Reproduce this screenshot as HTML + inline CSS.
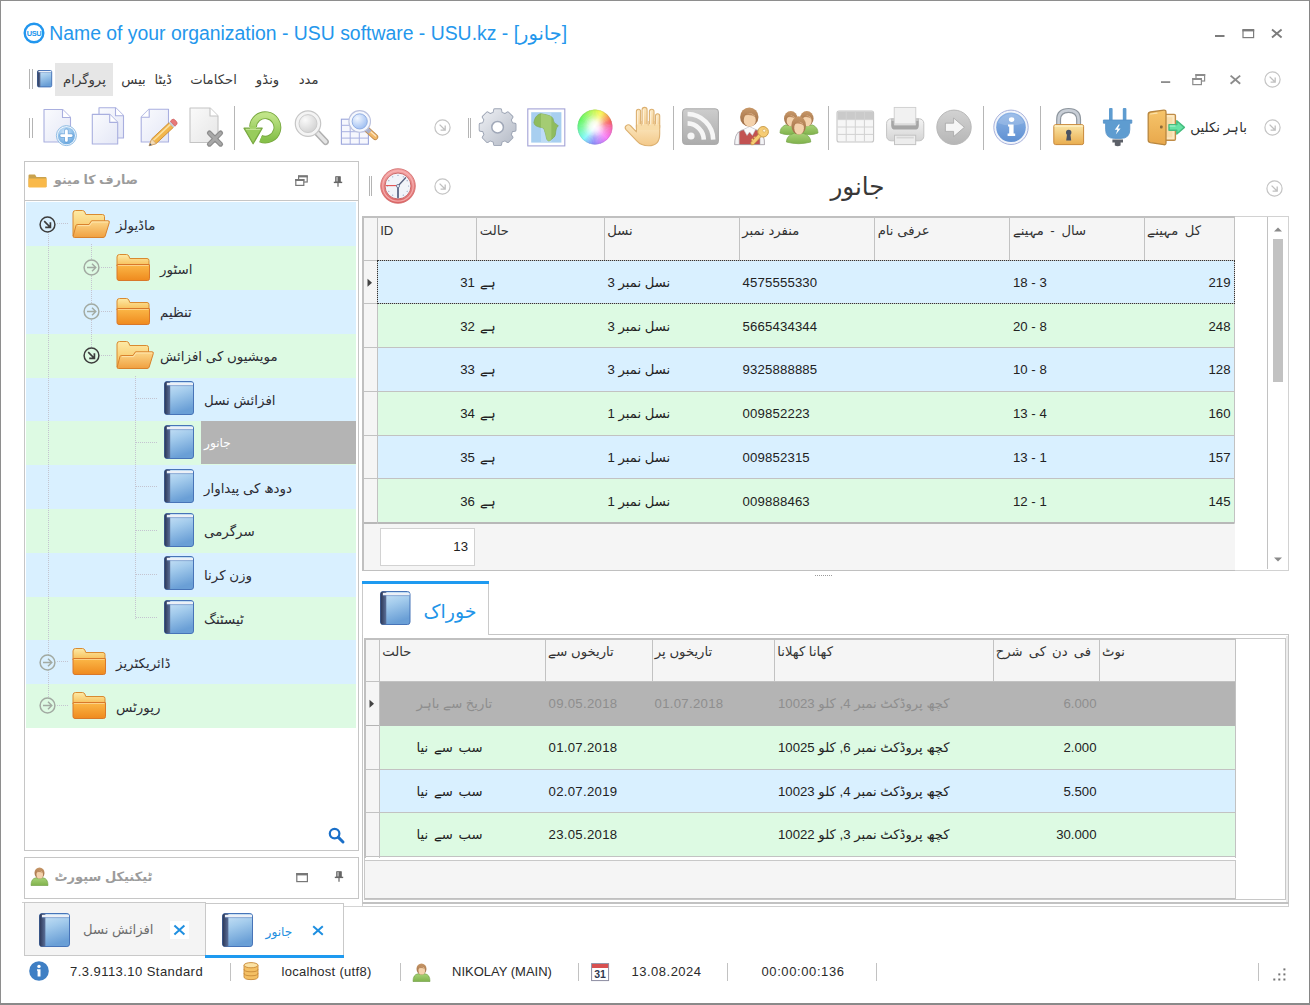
<!DOCTYPE html>
<html><head><meta charset="utf-8"><title>USU</title>
<style>
html,body{margin:0;padding:0}
body{width:1310px;height:1005px;position:relative;overflow:hidden;background:#fff;font-family:"Liberation Sans","DejaVu Sans",sans-serif;font-size:13px;color:#222}
body>div,body>svg{position:absolute;box-sizing:border-box}
.t{white-space:nowrap;line-height:16px;height:16px}
.g{color:#9c9c9c;font-weight:bold}
.i{overflow:visible}
</style></head><body>
<svg width="0" height="0" style="position:absolute;left:0;top:0"><defs>
<linearGradient id="gBkF" x1="0" y1="0" x2="0.3" y2="1"><stop offset="0" stop-color="#cfe6f8"/><stop offset="0.45" stop-color="#a3cbec"/><stop offset="1" stop-color="#6a9fd6"/></linearGradient>
<linearGradient id="gBkS" x1="0" y1="0" x2="1" y2="0"><stop offset="0" stop-color="#2b3656"/><stop offset="1" stop-color="#5b7099"/></linearGradient>
<linearGradient id="gFoB" x1="0" y1="0" x2="0" y2="1"><stop offset="0" stop-color="#fdeaa6"/><stop offset="1" stop-color="#f7bd55"/></linearGradient>
<linearGradient id="gFoF" x1="0" y1="0" x2="0" y2="1"><stop offset="0" stop-color="#fbb848"/><stop offset="1" stop-color="#ef8a1e"/></linearGradient>
<linearGradient id="gFoO" x1="0" y1="0" x2="0" y2="1"><stop offset="0" stop-color="#fcd88a"/><stop offset="1" stop-color="#f0a040"/></linearGradient>
<linearGradient id="gPg" x1="0" y1="0" x2="1" y2="1"><stop offset="0" stop-color="#fafbfe"/><stop offset="1" stop-color="#e4e7f6"/></linearGradient>
<linearGradient id="gPgG" x1="0" y1="0" x2="1" y2="1"><stop offset="0" stop-color="#fafafa"/><stop offset="1" stop-color="#e6e6e6"/></linearGradient>
<radialGradient id="gPlus" cx="0.4" cy="0.3" r="0.8"><stop offset="0" stop-color="#cfe6fa"/><stop offset="1" stop-color="#5fa2dc"/></radialGradient>
<linearGradient id="gGrn" x1="0" y1="0" x2="0" y2="1"><stop offset="0" stop-color="#c0e488"/><stop offset="1" stop-color="#86c04a"/></linearGradient>
<radialGradient id="gLens" cx="0.35" cy="0.3" r="0.8"><stop offset="0" stop-color="#fafafa"/><stop offset="1" stop-color="#cfcfcf"/></radialGradient>
<radialGradient id="gLensB" cx="0.35" cy="0.3" r="0.8"><stop offset="0" stop-color="#f2f7ff"/><stop offset="1" stop-color="#98baf0"/></radialGradient>
<linearGradient id="gGear" x1="0" y1="0" x2="1" y2="1"><stop offset="0" stop-color="#eef0f4"/><stop offset="1" stop-color="#b4bac6"/></linearGradient>
<linearGradient id="gSkin" x1="0" y1="0" x2="0" y2="1"><stop offset="0" stop-color="#fbe6bd"/><stop offset="1" stop-color="#f3c98a"/></linearGradient>
<linearGradient id="gGray" x1="0" y1="0" x2="0" y2="1"><stop offset="0" stop-color="#cdcdcd"/><stop offset="1" stop-color="#acacac"/></linearGradient>
<linearGradient id="gGray2" x1="0" y1="0" x2="0" y2="1"><stop offset="0" stop-color="#d2d2d2"/><stop offset="1" stop-color="#b6b6b6"/></linearGradient>
<linearGradient id="gGrayL" x1="0" y1="0" x2="0" y2="1"><stop offset="0" stop-color="#f4f4f4"/><stop offset="1" stop-color="#d4d4d4"/></linearGradient>
<linearGradient id="gInfo" x1="0" y1="0" x2="0" y2="1"><stop offset="0" stop-color="#8eb4e6"/><stop offset="1" stop-color="#5f90d2"/></linearGradient>
<linearGradient id="gLock" x1="0" y1="0" x2="0" y2="1"><stop offset="0" stop-color="#fae6a8"/><stop offset="1" stop-color="#e9ad4e"/></linearGradient>
<linearGradient id="gDoor" x1="0" y1="0" x2="0" y2="1"><stop offset="0" stop-color="#f6c46a"/><stop offset="1" stop-color="#e8a84c"/></linearGradient>
<linearGradient id="gBodyG" x1="0" y1="0" x2="0" y2="1"><stop offset="0" stop-color="#a8d276"/><stop offset="1" stop-color="#80b24c"/></linearGradient>
<linearGradient id="gHair" x1="0" y1="0" x2="0" y2="1"><stop offset="0" stop-color="#c89868"/><stop offset="1" stop-color="#9a6a44"/></linearGradient>
<linearGradient id="gClk" x1="0" y1="0" x2="0" y2="1"><stop offset="0" stop-color="#f4a4a4"/><stop offset="1" stop-color="#dc6464"/></linearGradient>
<radialGradient id="gWh" cx="0.5" cy="0.5" r="0.5"><stop offset="0" stop-color="#fff"/><stop offset="0.25" stop-color="#fff" stop-opacity="0.85"/><stop offset="0.65" stop-color="#fff" stop-opacity="0.3"/><stop offset="1" stop-color="#fff" stop-opacity="0.05"/></radialGradient>
</defs></svg>
<div class="" style="left:0px;top:0px;width:1310px;height:1px;background:#8e8e8e"></div>
<div class="" style="left:0px;top:0px;width:1.1px;height:1005px;background:#8e8e8e"></div>
<div class="" style="left:1308.6px;top:0px;width:1.4px;height:1005px;background:#868686"></div>
<div class="" style="left:0px;top:1003.3px;width:1310px;height:1.7px;background:#8a8a8a"></div>
<svg class="i" style="left:23px;top:21.5px" width="22" height="22" viewBox="0 0 22 22" ><circle cx="11" cy="11" r="9.3" fill="#fff" stroke="#2196ee" stroke-width="2.4"/><text x="11" y="13.8" font-size="7.4" font-weight="bold" text-anchor="middle" fill="#2196ee" font-family="Liberation Sans,sans-serif" letter-spacing="-0.4">USU</text></svg>
<div class="t" style="left:49.2px;top:20px;font-size:19.4px;line-height:26px;height:26px;color:#2497ec">Name of your organization - USU software - USU.kz - [جانور]</div>
<svg class="i" style="left:1214px;top:28px" width="70" height="12" viewBox="0 0 70 12" ><rect x="1" y="7" width="9.5" height="2" fill="#7c7c7c"/><rect x="29" y="2.2" width="10.6" height="7.4" fill="none" stroke="#7c7c7c" stroke-width="1.2"/><rect x="28.4" y="1" width="11.8" height="2.4" fill="#7c7c7c"/><path d="M58,1.6 L67.6,9.4 M67.6,1.6 L58,9.4" stroke="#7c7c7c" stroke-width="1.9"/></svg>
<svg class="i" style="left:1160px;top:73px" width="84" height="14" viewBox="0 0 84 14" ><rect x="1" y="8.2" width="9.2" height="1.8" fill="#8c8c8c"/><rect x="36" y="1.6" width="8.6" height="6.4" fill="#fff" stroke="#8c8c8c" stroke-width="1.2"/><rect x="35.4" y="1" width="9.8" height="2" fill="#8c8c8c"/><rect x="32.8" y="5.6" width="8.6" height="6" fill="#fff" stroke="#8c8c8c" stroke-width="1.2"/><rect x="32.2" y="5" width="9.8" height="2" fill="#8c8c8c"/><path d="M70.6,2.6 L80.2,10.8 M80.2,2.6 L70.6,10.8" stroke="#8c8c8c" stroke-width="1.9"/></svg>
<svg class="i" style="left:1263.5px;top:71px" width="17" height="17" viewBox="0 0 17 17" ><circle cx="8.5" cy="8.5" r="7.6" fill="#fff" stroke="#c4c4c4" stroke-width="1.2"/><path d="M5.6,5.6 L10.8,10.8 M6.6,11.2 H11.2 V6.6" fill="none" stroke="#c0c0c0" stroke-width="1.3"/></svg>
<div class="" style="left:29px;top:69px;width:1px;height:19.5px;background:#b4b4b4"></div>
<div class="" style="left:31.6px;top:69px;width:1px;height:19.5px;background:#b4b4b4"></div>
<svg class="i" style="left:37.3px;top:70px" width="15.2" height="17.4" viewBox="0 0 15.2 17.4" ><rect x="0.5" y="0.5" width="14.2" height="16.4" rx="1.27" fill="url(#gBkF)" stroke="#4774b8" stroke-width="1"/><path d="M1.77,0.5 H3.39 V16.9 H1.77 A1.27,1.27 0 0 1 0.5,15.63 V1.77 A1.27,1.27 0 0 1 1.77,0.5 Z" fill="url(#gBkS)"/><rect x="1.44" y="0.96" width="12.76" height="1.22" fill="#ecf0f7"/><rect x="1.44" y="2.17" width="12.76" height="0.60" fill="#6f8fc4" opacity="0.75"/></svg>
<div class="" style="left:55px;top:62.5px;width:57.5px;height:33px;background:#e6e6e6"></div>
<div class="t" style="right:1204.2px;top:71.4px;font-size:13.2px;line-height:18px;height:18px;color:#383838">پروگرام</div>
<div class="t" style="right:1138px;top:71.4px;font-size:13.2px;line-height:18px;height:18px;color:#383838;word-spacing:5px">ڈیٹا بیس</div>
<div class="t" style="right:1073.2px;top:71.4px;font-size:13.2px;line-height:18px;height:18px;color:#383838">احکامات</div>
<div class="t" style="right:1030.8px;top:71.4px;font-size:13.2px;line-height:18px;height:18px;color:#383838">ونڈو</div>
<div class="t" style="right:991.5px;top:71.4px;font-size:13.2px;line-height:18px;height:18px;color:#383838">مدد</div>
<div class="" style="left:29px;top:117.5px;width:1px;height:20px;background:#b4b4b4"></div>
<div class="" style="left:31.6px;top:117.5px;width:1px;height:20px;background:#b4b4b4"></div>
<svg class="i" style="left:43px;top:107px" width="36" height="40" viewBox="0 0 36 40" ><path d="M1,2.5 H19.5 L27.5,10.5 V35.0 H1 Z" fill="url(#gPg)" stroke="#a9afdf" stroke-width="1.1" stroke-linejoin="round"/><path d="M19.5,2.5 V10.5 H27.5" fill="#fff" stroke="#a9afdf" stroke-width="1.1" stroke-linejoin="round"/><circle cx="23.4" cy="28.6" r="10" fill="#f0f6fc" stroke="#8fbce4" stroke-width="1"/><circle cx="23.4" cy="28.6" r="8.6" fill="url(#gPlus)"/><path d="M23.4,23.6 V33.6 M18.4,28.6 H28.4" stroke="#5c98d4" stroke-width="4.6" stroke-linecap="round" opacity="0.55"/><path d="M23.4,23.8 V33.4 M18.6,28.6 H28.2" stroke="#fff" stroke-width="2.8" stroke-linecap="round"/></svg>
<svg class="i" style="left:91px;top:106px" width="34" height="40" viewBox="0 0 34 40" ><path d="M8,1.7 H24.5 L32.5,9.7 V32.0 H8 Z" fill="url(#gPg)" stroke="#a9afdf" stroke-width="1.1" stroke-linejoin="round"/><path d="M24.5,1.7 V9.7 H32.5" fill="#fff" stroke="#a9afdf" stroke-width="1.1" stroke-linejoin="round"/><path d="M1.3,8.4 H18.7 L26.7,16.4 V38.0 H1.3 Z" fill="url(#gPg)" stroke="#a9afdf" stroke-width="1.1" stroke-linejoin="round"/><path d="M18.7,8.4 V16.4 H26.7" fill="#fff" stroke="#a9afdf" stroke-width="1.1" stroke-linejoin="round"/></svg>
<svg class="i" style="left:140px;top:107px" width="38" height="40" viewBox="0 0 38 40" ><path d="M9.2,2.2 H28.5 V35.0 H1.2 V10.2 Z" fill="url(#gPg)" stroke="#a9afdf" stroke-width="1.1" stroke-linejoin="round"/><path d="M9.2,2.2 V10.2 H1.2" fill="#fff" stroke="#a9afdf" stroke-width="1.1" stroke-linejoin="round"/><g transform="translate(9.2,38.7) rotate(-43.2)"><path d="M0,0 L6.5,-3.2 H30 V3.2 H6.5 Z" fill="#f2b64c" stroke="#c8862c" stroke-width="0.8"/><path d="M6.5,-1 H30" stroke="#fbe0a0" stroke-width="1.6"/><path d="M0,0 L6.5,-3.2 V3.2 Z" fill="#f3dcb8" stroke="#c8a070" stroke-width="0.6"/><path d="M0,0 L2.4,-1.2 V1.2 Z" fill="#4a5a78"/><rect x="30" y="-3.4" width="2.2" height="6.8" fill="#c8ccd4"/><path d="M32.2,-3.4 H34.5 Q36.5,-3.4 36.5,0 Q36.5,3.4 34.5,3.4 H32.2 Z" fill="#e87878" stroke="#c85858" stroke-width="0.6"/></g></svg>
<svg class="i" style="left:189px;top:106px" width="36" height="40" viewBox="0 0 36 40" ><path d="M1,2 H21 L29,10 V36.5 H1 Z" fill="url(#gPgG)" stroke="#c4c4c4" stroke-width="1.1" stroke-linejoin="round"/><path d="M21,2 V10 H29" fill="#fff" stroke="#c4c4c4" stroke-width="1.1" stroke-linejoin="round"/><path d="M20.4,27 L31.6,38.2 M31.6,27 L20.4,38.2" stroke="#8c8c8c" stroke-width="5" stroke-linecap="round"/><path d="M20.6,27.2 L31.4,38 M31.4,27.2 L20.6,38" stroke="#a8a8a8" stroke-width="2.8" stroke-linecap="round"/></svg>
<div class="" style="left:234px;top:105.5px;width:1px;height:44.5px;background:#b6b6b6"></div>
<svg class="i" style="left:242px;top:109px" width="40" height="36" viewBox="0 0 40 36" ><path d="M18.63,29.71 A12.2,12.2 0 1 0 11.01,17.97" fill="none" stroke="#78a840" stroke-width="7.8"/><path d="M2,19.2 H20.2 L11.1,34.8 Z" fill="#78a840" stroke="#78a840" stroke-width="1.2" stroke-linejoin="round"/><path d="M18.63,29.71 A12.2,12.2 0 1 0 11.01,17.97" fill="none" stroke="url(#gGrn)" stroke-width="6"/><path d="M3.2,20 H19 L11.1,33.4 Z" fill="#98cc5c"/><path d="M11,17.6 V21" stroke="#a4d468" stroke-width="6"/><path d="M3.8,20.4 H18.4" stroke="#c4e494" stroke-width="1.2" opacity="0.9"/></svg>
<svg class="i" style="left:293px;top:109px" width="36" height="38" viewBox="0 0 36 38" ><path d="M24.6,24.2 L32.6,32.8" stroke="#b0b0b0" stroke-width="6.6" stroke-linecap="round"/><path d="M24.6,24.2 L32.6,32.8" stroke="#e4e4e4" stroke-width="3.6" stroke-linecap="round"/><circle cx="15" cy="14.6" r="12.7" fill="#f4f4f4" stroke="#c6c6c6" stroke-width="1.2"/><circle cx="15" cy="14.6" r="9" fill="url(#gLens)" stroke="#c8c8c8" stroke-width="0.9"/></svg>
<svg class="i" style="left:340px;top:108px" width="40" height="38" viewBox="0 0 40 38" ><rect x="1.4" y="11.2" width="27" height="25" fill="#f6f7fd" stroke="#9ca6dc" stroke-width="1.1"/><path d="M10.2,11.2 V36.2" stroke="#a8b0e0" stroke-width="1"/><path d="M19.3,11.2 V36.2" stroke="#a8b0e0" stroke-width="1"/><path d="M1.4,17.3 H28.4" stroke="#a8b0e0" stroke-width="1"/><path d="M1.4,23.7 H28.4" stroke="#a8b0e0" stroke-width="1"/><path d="M1.4,30.1 H28.4" stroke="#a8b0e0" stroke-width="1"/><path d="M27,21.6 L35.2,29" stroke="#c08c50" stroke-width="6" stroke-linecap="round"/><path d="M30.6,24.8 L35.2,29" stroke="#f2b868" stroke-width="4.4" stroke-linecap="round"/><path d="M31,24 L35.6,28" stroke="#fbe4c0" stroke-width="1.4" stroke-linecap="round"/><path d="M26.4,20.8 L30,24.2" stroke="#aab0c8" stroke-width="4.4"/><circle cx="19.7" cy="13.4" r="10.8" fill="#f6f8fd" stroke="#bcc2de" stroke-width="1.1"/><circle cx="19.7" cy="13.4" r="7.6" fill="url(#gLensB)" stroke="#8aa8e0" stroke-width="0.9"/></svg>
<svg class="i" style="left:434.3px;top:119.2px" width="17" height="17" viewBox="0 0 17 17" ><circle cx="8.5" cy="8.5" r="7.6" fill="#fff" stroke="#c4c4c4" stroke-width="1.2"/><path d="M5.6,5.6 L10.8,10.8 M6.6,11.2 H11.2 V6.6" fill="none" stroke="#c0c0c0" stroke-width="1.3"/></svg>
<div class="" style="left:467.5px;top:117.5px;width:1px;height:20px;background:#b4b4b4"></div>
<div class="" style="left:470.1px;top:117.5px;width:1px;height:20px;background:#b4b4b4"></div>
<svg class="i" style="left:478px;top:108px" width="40" height="40" viewBox="0 0 40 40" ><path d="M16.25,5.20 L16.83,2.02 L22.37,2.02 L22.95,5.20 L27.13,6.93 L29.79,5.09 L33.71,9.01 L31.87,11.67 L33.60,15.85 L36.78,16.43 L36.78,21.97 L33.60,22.55 L31.87,26.73 L33.71,29.39 L29.79,33.31 L27.13,31.47 L22.95,33.20 L22.37,36.38 L16.83,36.38 L16.25,33.20 L12.07,31.47 L9.41,33.31 L5.49,29.39 L7.33,26.73 L5.60,22.55 L2.42,21.97 L2.42,16.43 L5.60,15.85 L7.33,11.67 L5.49,9.01 L9.41,5.09 L12.07,6.93 Z" fill="#c8ccd6" stroke="#9ca4b4" stroke-width="3.4" stroke-linejoin="round"/><path d="M16.25,5.20 L16.83,2.02 L22.37,2.02 L22.95,5.20 L27.13,6.93 L29.79,5.09 L33.71,9.01 L31.87,11.67 L33.60,15.85 L36.78,16.43 L36.78,21.97 L33.60,22.55 L31.87,26.73 L33.71,29.39 L29.79,33.31 L27.13,31.47 L22.95,33.20 L22.37,36.38 L16.83,36.38 L16.25,33.20 L12.07,31.47 L9.41,33.31 L5.49,29.39 L7.33,26.73 L5.60,22.55 L2.42,21.97 L2.42,16.43 L5.60,15.85 L7.33,11.67 L5.49,9.01 L9.41,5.09 L12.07,6.93 Z" fill="url(#gGear)" stroke="url(#gGear)" stroke-width="1.6" stroke-linejoin="round"/><circle cx="19.6" cy="19.2" r="5.8" fill="#fff" stroke="#a0a8b8" stroke-width="1.5"/></svg>
<svg class="i" style="left:527px;top:108px" width="39" height="39" viewBox="0 0 39 39" ><rect x="0.8" y="0.9" width="37" height="37" fill="#fff" stroke="#a2a2d6" stroke-width="1.1"/><rect x="4.2" y="4.2" width="30.2" height="30.4" fill="#a8cff0"/><rect x="14" y="4.2" width="10.4" height="30.4" fill="#c6e0f6" opacity="0.7"/><path d="M7.1,13.6 C7.37,12.60 7.77,10.47 8.7,9.2 C9.63,7.93 11.23,6.47 12.7,6.0 C14.17,5.53 15.77,6.07 17.5,6.4 C19.23,6.73 21.70,7.33 23.1,8.0 C24.50,8.67 25.23,9.33 25.9,10.4 C26.57,11.47 26.23,13.20 27.1,14.4 C27.97,15.60 30.70,16.67 31.1,17.6 C31.50,18.53 29.90,18.93 29.5,20.0 C29.10,21.07 28.97,22.67 28.7,24.0 C28.43,25.33 28.57,26.80 27.9,28.0 C27.23,29.20 25.70,30.38 24.7,31.2 C23.70,32.02 22.70,32.88 21.9,32.9 C21.10,32.92 20.43,32.37 19.9,31.3 C19.37,30.23 19.10,27.97 18.7,26.5 C18.30,25.03 17.90,23.58 17.5,22.5 C17.10,21.42 17.10,20.55 16.3,20.0 C15.50,19.45 13.97,19.60 12.7,19.2 C11.43,18.80 9.63,18.27 8.7,17.6 C7.77,16.93 7.37,15.87 7.1,15.2 C6.83,14.53 6.83,14.60 7.1,13.6 Z" fill="#8fbc5e" stroke="#7ea854" stroke-width="0.7"/><clipPath id="cpAf"><rect x="14" y="0" width="10.4" height="39"/></clipPath><path d="M7.1,13.6 C7.37,12.60 7.77,10.47 8.7,9.2 C9.63,7.93 11.23,6.47 12.7,6.0 C14.17,5.53 15.77,6.07 17.5,6.4 C19.23,6.73 21.70,7.33 23.1,8.0 C24.50,8.67 25.23,9.33 25.9,10.4 C26.57,11.47 26.23,13.20 27.1,14.4 C27.97,15.60 30.70,16.67 31.1,17.6 C31.50,18.53 29.90,18.93 29.5,20.0 C29.10,21.07 28.97,22.67 28.7,24.0 C28.43,25.33 28.57,26.80 27.9,28.0 C27.23,29.20 25.70,30.38 24.7,31.2 C23.70,32.02 22.70,32.88 21.9,32.9 C21.10,32.92 20.43,32.37 19.9,31.3 C19.37,30.23 19.10,27.97 18.7,26.5 C18.30,25.03 17.90,23.58 17.5,22.5 C17.10,21.42 17.10,20.55 16.3,20.0 C15.50,19.45 13.97,19.60 12.7,19.2 C11.43,18.80 9.63,18.27 8.7,17.6 C7.77,16.93 7.37,15.87 7.1,15.2 C6.83,14.53 6.83,14.60 7.1,13.6 Z" fill="#a9d078" clip-path="url(#cpAf)" opacity="0.8"/></svg>
<svg class="i" style="left:577px;top:109.3px" width="36" height="36" viewBox="0 0 36 36" ><path d="M18,18 L17.65,0.60 A17.4,17.4 0 0 1 20.16,0.74 Z" fill="hsl(73,90%,59%)"/><path d="M18,18 L19.47,0.66 A17.4,17.4 0 0 1 21.96,1.06 Z" fill="hsl(69,90%,59%)"/><path d="M18,18 L21.28,0.91 A17.4,17.4 0 0 1 23.71,1.56 Z" fill="hsl(65,90%,59%)"/><path d="M18,18 L23.04,1.35 A17.4,17.4 0 0 1 25.39,2.25 Z" fill="hsl(61,90%,59%)"/><path d="M18,18 L24.76,1.97 A17.4,17.4 0 0 1 27.00,3.11 Z" fill="hsl(57,90%,59%)"/><path d="M18,18 L26.40,2.76 A17.4,17.4 0 0 1 28.51,4.13 Z" fill="hsl(52,90%,59%)"/><path d="M18,18 L27.94,3.72 A17.4,17.4 0 0 1 29.90,5.30 Z" fill="hsl(44,90%,59%)"/><path d="M18,18 L29.38,4.84 A17.4,17.4 0 0 1 31.16,6.62 Z" fill="hsl(38,90%,60%)"/><path d="M18,18 L30.70,6.10 A17.4,17.4 0 0 1 32.28,8.06 Z" fill="hsl(30,90%,60%)"/><path d="M18,18 L31.87,7.49 A17.4,17.4 0 0 1 33.24,9.60 Z" fill="hsl(24,90%,60%)"/><path d="M18,18 L32.89,9.00 A17.4,17.4 0 0 1 34.03,11.24 Z" fill="hsl(16,90%,61%)"/><path d="M18,18 L33.75,10.61 A17.4,17.4 0 0 1 34.65,12.96 Z" fill="hsl(6,90%,62%)"/><path d="M18,18 L34.44,12.29 A17.4,17.4 0 0 1 35.09,14.72 Z" fill="hsl(358,90%,63%)"/><path d="M18,18 L34.94,14.04 A17.4,17.4 0 0 1 35.34,16.53 Z" fill="hsl(348,90%,64%)"/><path d="M18,18 L35.26,15.84 A17.4,17.4 0 0 1 35.40,18.35 Z" fill="hsl(340,90%,65%)"/><path d="M18,18 L35.40,17.65 A17.4,17.4 0 0 1 35.26,20.16 Z" fill="hsl(333,90%,66%)"/><path d="M18,18 L35.34,19.47 A17.4,17.4 0 0 1 34.94,21.96 Z" fill="hsl(328,90%,66%)"/><path d="M18,18 L35.09,21.28 A17.4,17.4 0 0 1 34.44,23.71 Z" fill="hsl(323,90%,67%)"/><path d="M18,18 L34.65,23.04 A17.4,17.4 0 0 1 33.75,25.39 Z" fill="hsl(319,90%,67%)"/><path d="M18,18 L34.03,24.76 A17.4,17.4 0 0 1 32.89,27.00 Z" fill="hsl(314,90%,68%)"/><path d="M18,18 L33.24,26.40 A17.4,17.4 0 0 1 31.87,28.51 Z" fill="hsl(309,90%,68%)"/><path d="M18,18 L32.28,27.94 A17.4,17.4 0 0 1 30.70,29.90 Z" fill="hsl(305,90%,69%)"/><path d="M18,18 L31.16,29.38 A17.4,17.4 0 0 1 29.38,31.16 Z" fill="hsl(300,90%,70%)"/><path d="M18,18 L29.90,30.70 A17.4,17.4 0 0 1 27.94,32.28 Z" fill="hsl(293,90%,70%)"/><path d="M18,18 L28.51,31.87 A17.4,17.4 0 0 1 26.40,33.24 Z" fill="hsl(287,90%,71%)"/><path d="M18,18 L27.00,32.89 A17.4,17.4 0 0 1 24.76,34.03 Z" fill="hsl(280,90%,71%)"/><path d="M18,18 L25.39,33.75 A17.4,17.4 0 0 1 23.04,34.65 Z" fill="hsl(273,90%,72%)"/><path d="M18,18 L23.71,34.44 A17.4,17.4 0 0 1 21.28,35.09 Z" fill="hsl(267,90%,72%)"/><path d="M18,18 L21.96,34.94 A17.4,17.4 0 0 1 19.47,35.34 Z" fill="hsl(260,90%,73%)"/><path d="M18,18 L20.16,35.26 A17.4,17.4 0 0 1 17.65,35.40 Z" fill="hsl(253,90%,73%)"/><path d="M18,18 L18.35,35.40 A17.4,17.4 0 0 1 15.84,35.26 Z" fill="hsl(245,90%,73%)"/><path d="M18,18 L16.53,35.34 A17.4,17.4 0 0 1 14.04,34.94 Z" fill="hsl(236,90%,73%)"/><path d="M18,18 L14.72,35.09 A17.4,17.4 0 0 1 12.29,34.44 Z" fill="hsl(227,90%,73%)"/><path d="M18,18 L12.96,34.65 A17.4,17.4 0 0 1 10.61,33.75 Z" fill="hsl(217,90%,72%)"/><path d="M18,18 L11.24,34.03 A17.4,17.4 0 0 1 9.00,32.89 Z" fill="hsl(208,90%,72%)"/><path d="M18,18 L9.60,33.24 A17.4,17.4 0 0 1 7.49,31.87 Z" fill="hsl(199,90%,71%)"/><path d="M18,18 L8.06,32.28 A17.4,17.4 0 0 1 6.10,30.70 Z" fill="hsl(189,90%,70%)"/><path d="M18,18 L6.62,31.16 A17.4,17.4 0 0 1 4.84,29.38 Z" fill="hsl(180,90%,70%)"/><path d="M18,18 L5.30,29.90 A17.4,17.4 0 0 1 3.72,27.94 Z" fill="hsl(174,90%,69%)"/><path d="M18,18 L4.13,28.51 A17.4,17.4 0 0 1 2.76,26.40 Z" fill="hsl(168,90%,68%)"/><path d="M18,18 L3.11,27.00 A17.4,17.4 0 0 1 1.97,24.76 Z" fill="hsl(162,90%,67%)"/><path d="M18,18 L2.25,25.39 A17.4,17.4 0 0 1 1.35,23.04 Z" fill="hsl(156,90%,67%)"/><path d="M18,18 L1.56,23.71 A17.4,17.4 0 0 1 0.91,21.28 Z" fill="hsl(150,90%,66%)"/><path d="M18,18 L1.06,21.96 A17.4,17.4 0 0 1 0.66,19.47 Z" fill="hsl(144,90%,65%)"/><path d="M18,18 L0.74,20.16 A17.4,17.4 0 0 1 0.60,17.65 Z" fill="hsl(138,90%,65%)"/><path d="M18,18 L0.60,18.35 A17.4,17.4 0 0 1 0.74,15.84 Z" fill="hsl(133,90%,64%)"/><path d="M18,18 L0.66,16.53 A17.4,17.4 0 0 1 1.06,14.04 Z" fill="hsl(130,90%,64%)"/><path d="M18,18 L0.91,14.72 A17.4,17.4 0 0 1 1.56,12.29 Z" fill="hsl(127,90%,63%)"/><path d="M18,18 L1.35,12.96 A17.4,17.4 0 0 1 2.25,10.61 Z" fill="hsl(123,90%,63%)"/><path d="M18,18 L1.97,11.24 A17.4,17.4 0 0 1 3.11,9.00 Z" fill="hsl(120,90%,62%)"/><path d="M18,18 L2.76,9.60 A17.4,17.4 0 0 1 4.13,7.49 Z" fill="hsl(117,90%,62%)"/><path d="M18,18 L3.72,8.06 A17.4,17.4 0 0 1 5.30,6.10 Z" fill="hsl(113,90%,62%)"/><path d="M18,18 L4.84,6.62 A17.4,17.4 0 0 1 6.62,4.84 Z" fill="hsl(110,90%,62%)"/><path d="M18,18 L6.10,5.30 A17.4,17.4 0 0 1 8.06,3.72 Z" fill="hsl(105,90%,61%)"/><path d="M18,18 L7.49,4.13 A17.4,17.4 0 0 1 9.60,2.76 Z" fill="hsl(101,90%,61%)"/><path d="M18,18 L9.00,3.11 A17.4,17.4 0 0 1 11.24,1.97 Z" fill="hsl(96,90%,60%)"/><path d="M18,18 L10.61,2.25 A17.4,17.4 0 0 1 12.96,1.35 Z" fill="hsl(91,90%,60%)"/><path d="M18,18 L12.29,1.56 A17.4,17.4 0 0 1 14.72,0.91 Z" fill="hsl(87,90%,60%)"/><path d="M18,18 L14.04,1.06 A17.4,17.4 0 0 1 16.53,0.66 Z" fill="hsl(82,90%,60%)"/><path d="M18,18 L15.84,0.74 A17.4,17.4 0 0 1 18.35,0.60 Z" fill="hsl(77,90%,59%)"/><circle cx="17.4" cy="17.4" r="18.0" fill="url(#gWh)"/><circle cx="18" cy="18" r="17.099999999999998" fill="none" stroke="#8090a0" stroke-opacity="0.22" stroke-width="0.9"/></svg>
<svg class="i" style="left:624px;top:107px" width="38" height="40" viewBox="0 0 38 40" ><rect x="12.4" y="2.2" width="4.2" height="19.8" rx="2.10" fill="url(#gSkin)" stroke="#dcb070" stroke-width="1.1"/><rect x="18.1" y="0.4" width="5.0" height="21.6" rx="2.50" fill="url(#gSkin)" stroke="#dcb070" stroke-width="1.1"/><rect x="25.4" y="2.2" width="4.6" height="19.8" rx="2.30" fill="url(#gSkin)" stroke="#dcb070" stroke-width="1.1"/><rect x="31.5" y="6.7" width="4.2" height="15.3" rx="2.10" fill="url(#gSkin)" stroke="#dcb070" stroke-width="1.1"/><path d="M12.4,18.4 H35.7 V27 Q35.7,38.8 24.5,38.8 Q17,38.8 13,34.2 L2,22.6 Q0.2,20.4 2.2,18.6 Q4.6,16.8 6.8,19 L12.4,24.8 Z" fill="url(#gSkin)" stroke="#dcb070" stroke-width="1.1" stroke-linejoin="round"/><rect x="13" y="17" width="22.1" height="6" fill="#f8dca8"/><path d="M13.7,4.7 V17" stroke="#fdf0d6" stroke-width="1.2" stroke-linecap="round"/><path d="M19.4,2.9 V17" stroke="#fdf0d6" stroke-width="1.2" stroke-linecap="round"/><path d="M26.7,4.7 V17" stroke="#fdf0d6" stroke-width="1.2" stroke-linecap="round"/><path d="M32.8,9.2 V17" stroke="#fdf0d6" stroke-width="1.2" stroke-linecap="round"/><path d="M17.35,14 V18.6 M24.25,14 V18.6 M30.75,14 V18.6" stroke="#e6c088" stroke-width="1"/></svg>
<div class="" style="left:672.5px;top:105.5px;width:1px;height:44.5px;background:#b6b6b6"></div>
<svg class="i" style="left:682px;top:108px" width="37" height="37" viewBox="0 0 37 37" ><rect x="0.6" y="0.8" width="35.8" height="35.6" rx="3" fill="url(#gGray)" stroke="#a8a8a8" stroke-width="1"/><circle cx="9" cy="28" r="3.6" fill="#f6f6f6"/><path d="M5.6,15.4 A16.6,16.6 0 0 1 21.8,31.6" fill="none" stroke="#f6f6f6" stroke-width="4.6"/><path d="M5.6,6 A26,26 0 0 1 31.2,31.6" fill="none" stroke="#f6f6f6" stroke-width="4.6"/></svg>
<svg class="i" style="left:734px;top:106px" width="36" height="41" viewBox="0 0 36 41" ><path d="M0.8,38.6 Q0.8,27 7.4,24.4 L15.6,22 L23.8,24.4 Q30.4,27 30.4,38.6 Z" fill="#c25252" stroke="#8e8e96" stroke-width="0.8"/><path d="M0.8,38.6 Q0.8,28.6 5.2,25.6 V38.6 Z M30.4,38.6 Q30.4,28.6 26,25.6 V38.6 Z" fill="#f4f4f6" stroke="#a8a8b0" stroke-width="0.6"/><path d="M9.6,23.4 L13,29.4 L15.6,26 L18.4,29.4 L21.6,23.4 L15.6,20.6 Z" fill="#fafafc" stroke="#c0c0c8" stroke-width="0.6"/><ellipse cx="15.3" cy="11" rx="9.2" ry="9.60" fill="url(#gHair)"/><ellipse cx="15.76" cy="13.88" rx="6.07" ry="6.72" fill="#f4d2ac"/><path d="M8.86,10.04 Q15.30,3.80 21.92,11.48 Q16.22,7.64 8.86,10.04 Z" fill="#b07a4c" opacity="0.8"/><g transform="translate(29.1,25.8) rotate(43)"><circle cx="0" cy="0" r="5.3" fill="#f6cc74" stroke="#c89a48" stroke-width="0.9"/><circle cx="0" cy="-1.6" r="1.5" fill="#fff4d8" stroke="#c89a48" stroke-width="0.5"/><path d="M-1.7,4.8 H1.7 V16 L0,17.6 L-1.7,16 V14 H-3.2 V12.2 H-1.7 V10.8 H-2.8 V9 H-1.7 Z" fill="#f6cc74" stroke="#c89a48" stroke-width="0.8"/></g></svg>
<svg class="i" style="left:779px;top:109px" width="40" height="36" viewBox="0 0 40 36" ><path d="M1,24.0 Q1,18.4 6.3,16.0 H12.2 Q17.5,18.4 17.5,24.0 Q9.2,27.4 1,24.0 Z" fill="url(#gBodyG)" stroke="#74a446" stroke-width="0.7"/><ellipse cx="11.8" cy="9.6" rx="6.8" ry="7.70" fill="url(#gHair)"/><ellipse cx="12.14" cy="11.91" rx="4.49" ry="5.39" fill="#f4d2ac"/><path d="M7.04,8.83 Q11.80,3.82 16.70,9.98 Q12.48,6.90 7.04,8.83 Z" fill="#b07a4c" opacity="0.8"/><path d="M22.5,24.0 Q22.5,18.4 27.8,16.0 H33.7 Q39,18.4 39,24.0 Q30.8,27.4 22.5,24.0 Z" fill="url(#gBodyG)" stroke="#74a446" stroke-width="0.7"/><ellipse cx="27.8" cy="9.6" rx="6.8" ry="7.70" fill="url(#gHair)"/><ellipse cx="28.14" cy="11.91" rx="4.49" ry="5.39" fill="#f4d2ac"/><path d="M23.04,8.83 Q27.80,3.82 32.70,9.98 Q28.48,6.90 23.04,8.83 Z" fill="#b07a4c" opacity="0.8"/><path d="M7.4,33.0 Q7.4,26.8 15.2,24.2 H24.0 Q31.8,26.8 31.8,33.0 Q19.6,36.4 7.4,33.0 Z" fill="url(#gBodyG)" stroke="#74a446" stroke-width="0.7"/><ellipse cx="19.7" cy="16.4" rx="7.3" ry="9.20" fill="url(#gHair)"/><ellipse cx="20.06" cy="19.16" rx="4.82" ry="6.44" fill="#f4d2ac"/><path d="M14.59,15.48 Q19.70,9.50 24.96,16.86 Q20.43,13.18 14.59,15.48 Z" fill="#b07a4c" opacity="0.8"/></svg>
<div class="" style="left:827.5px;top:105.5px;width:1px;height:44.5px;background:#b6b6b6"></div>
<svg class="i" style="left:836px;top:110px" width="39" height="33" viewBox="0 0 39 33" ><rect x="1" y="1" width="36.6" height="31" rx="2" fill="#f6f6f6" stroke="#c6c6c6" stroke-width="1.1"/><path d="M1.5,3 Q1.5,1.5 3,1.5 H35.6 Q37.1,1.5 37.1,3 V9.6 H1.5 Z" fill="#cacaca"/><path d="M10.2,1.5 V31.5" stroke="#d2d2d2" stroke-width="1"/><path d="M19.3,1.5 V31.5" stroke="#d2d2d2" stroke-width="1"/><path d="M28.4,1.5 V31.5" stroke="#d2d2d2" stroke-width="1"/><path d="M1.5,9.6 H37.1" stroke="#d2d2d2" stroke-width="1"/><path d="M1.5,17 H37.1" stroke="#d2d2d2" stroke-width="1"/><path d="M1.5,24.4 H37.1" stroke="#d2d2d2" stroke-width="1"/></svg>
<svg class="i" style="left:886px;top:106px" width="39" height="39" viewBox="0 0 39 39" ><rect x="0.6" y="12.8" width="37.2" height="22" rx="4.5" fill="url(#gGrayL)" stroke="#c4c4c4" stroke-width="1"/><path d="M5.2,12.8 H32.8 V19.4 Q32.8,23.6 28.6,23.6 H9.4 Q5.2,23.6 5.2,19.4 Z" fill="#a6a6a6"/><path d="M5.2,12.8 H32.8 V15 H5.2 Z" fill="#c4c4c4"/><rect x="8.2" y="1.4" width="21.6" height="16.6" fill="#f1f1f1" stroke="#cdcdcd" stroke-width="0.9"/><path d="M8.2,18 H29.8 V19.4 H8.2 Z" fill="#dcdcdc"/><rect x="8.5" y="29.2" width="21.2" height="9.4" fill="#ededed" stroke="#c2c2c2" stroke-width="1"/><path d="M10.5,31.6 H27.8" stroke="#d6d6d6" stroke-width="1.8"/></svg>
<svg class="i" style="left:936px;top:109px" width="36" height="36" viewBox="0 0 36 36" ><circle cx="18" cy="18.3" r="17.2" fill="url(#gGray2)" stroke="#b8b8b8" stroke-width="1"/><path d="M9.4,14.2 H17.6 V9 L28.4,18.3 L17.6,27.6 V22.4 H9.4 Z" fill="#f6f6f6" stroke="#a6a6a6" stroke-width="0.8" stroke-linejoin="round"/></svg>
<div class="" style="left:982.7px;top:105.5px;width:1px;height:44.5px;background:#b6b6b6"></div>
<svg class="i" style="left:993px;top:109px" width="36" height="36" viewBox="0 0 36 36" ><circle cx="18" cy="18.3" r="17.2" fill="#f2f5fb" stroke="#a8b2dc" stroke-width="1"/><circle cx="18" cy="18.3" r="14.8" fill="url(#gInfo)"/><path d="M4.8,14 A14,14 0 0 1 31.2,14 Q18,19 4.8,14 Z" fill="#fff" opacity="0.16"/><ellipse cx="18.6" cy="10.6" rx="2.7" ry="2.3" fill="#fff"/><path d="M15,15.4 H20.6 V24.6 H22.2 V27 H14.6 V24.6 H16.2 V17.6 H15 Z" fill="#fff"/></svg>
<div class="" style="left:1040px;top:105.5px;width:1px;height:44.5px;background:#b6b6b6"></div>
<svg class="i" style="left:1052px;top:107px" width="34" height="40" viewBox="0 0 34 40" ><path d="M6.6,19 V12.6 Q6.6,3.4 16.6,3.4 Q26.6,3.4 26.6,12.6 V19" fill="none" stroke="#8e969e" stroke-width="5"/><path d="M6.6,19 V12.6 Q6.6,3.4 16.6,3.4 Q26.6,3.4 26.6,12.6 V19" fill="none" stroke="#c8ced6" stroke-width="2.6"/><rect x="1.8" y="17.6" width="29.8" height="20" rx="1.8" fill="url(#gLock)" stroke="#c8883a" stroke-width="1"/><path d="M2.6,19 H30.8" stroke="#fff4cc" stroke-width="1.2"/><circle cx="16.7" cy="25.4" r="2.7" fill="#4a5262"/><path d="M15.2,26 H18.2 L19.2,33.6 H14.2 Z" fill="#4a5262"/></svg>
<svg class="i" style="left:1102px;top:107px" width="31" height="41" viewBox="0 0 31 41" ><rect x="7" y="1" width="3.6" height="13" rx="1" fill="#5e9cd0"/><rect x="20.8" y="1" width="3.6" height="13" rx="1" fill="#5e9cd0"/><path d="M1.4,13 H29.8 V16.2 H27.8 V22.6 Q27.8,31.4 19,31.4 H12.4 Q3.6,31.4 3.6,22.6 V16.2 H1.4 Z" fill="#5e9cd0" stroke="#5490c6" stroke-width="0.8"/><path d="M16.6,17.4 L12.8,22.8 H15.4 L13.8,27.6 L18.6,21.4 H15.9 L17.8,17.4 Z" fill="#fff"/><path d="M10.4,32.6 H21 V35.4 H18.6 V38.6 Q15.7,40 12.8,38.6 V35.4 H10.4 Z" fill="#5c6068"/></svg>
<svg class="i" style="left:1147px;top:108px" width="40" height="40" viewBox="0 0 40 40" ><rect x="15" y="6.4" width="13.4" height="25.8" rx="1.2" fill="#fde8c0" stroke="#c08c48" stroke-width="1.4"/><rect x="18" y="9.2" width="7.4" height="20.2" fill="#f8dcaa"/><path d="M1.2,6.6 Q1.2,4.4 3.4,4 L16.8,2.2 Q19,2 19,4.2 V34.8 Q19,37 16.8,36.7 L3.4,34.6 Q1.2,34.2 1.2,32 Z" fill="url(#gDoor)" stroke="#b8863e" stroke-width="1.3"/><path d="M3.6,6 L10,5.2" stroke="#fbe2a8" stroke-width="1.2" stroke-linecap="round"/><rect x="13" y="17.4" width="2.6" height="3.2" rx="0.8" fill="#8a6a3c"/><path d="M22,16.6 H29.8 V12.8 L37.4,19.4 L29.8,26 V22.2 H22 Z" fill="#66e2a4" stroke="#44bc7e" stroke-width="1.4" stroke-linejoin="round"/><path d="M23,18 H28" stroke="#b4f4d4" stroke-width="1.2" stroke-linecap="round"/></svg>
<div class="t" style="right:63px;top:119px;font-size:13.4px;line-height:18px;height:18px;color:#303030">باہر نکلیں</div>
<svg class="i" style="left:1263.5px;top:119.2px" width="17" height="17" viewBox="0 0 17 17" ><circle cx="8.5" cy="8.5" r="7.6" fill="#fff" stroke="#c4c4c4" stroke-width="1.2"/><path d="M5.6,5.6 L10.8,10.8 M6.6,11.2 H11.2 V6.6" fill="none" stroke="#c0c0c0" stroke-width="1.3"/></svg>
<div class="" style="left:24px;top:161px;width:335px;height:690px;border:1px solid #c6c6c6;background:#fff"></div>
<div class="" style="left:25px;top:200px;width:333px;height:1px;background:#c6c6c6"></div>
<svg class="i" style="left:28px;top:173.5px" width="19" height="14" viewBox="0 0 19 14" ><path d="M0.5,1.5 Q0.5,0.5 1.5,0.5 H7 L8.5,3 H17.5 Q18.5,3 18.5,4 V13 H0.5 Z" fill="#c9a24e"/><path d="M0.5,4.5 H18.5 V12.5 Q18.5,13.5 17.5,13.5 H1.5 Q0.5,13.5 0.5,12.5 Z" fill="#f9b94a"/></svg>
<div class="t g" style="left:54px;top:171px;font-size:12.6px;line-height:18px;height:18px">صارف کا مینو</div>
<svg class="i" style="left:294.5px;top:175px" width="14" height="12" viewBox="0 0 14 12" ><rect x="3.6" y="1" width="8.6" height="6" fill="#fff" stroke="#777" stroke-width="1.2"/><rect x="3" y="0.4" width="9.8" height="2" fill="#777"/><rect x="0.8" y="4.6" width="8" height="5.8" fill="#fff" stroke="#777" stroke-width="1.2"/><rect x="0.2" y="4" width="9.2" height="2" fill="#777"/></svg>
<svg class="i" style="left:333px;top:175.5px" width="10" height="11" viewBox="0 0 10 11" ><path d="M2.6,0.6 H7.4 V6 H2.6 Z" fill="#aaa" stroke="#777" stroke-width="1"/><rect x="5" y="1" width="2" height="5" fill="#666"/><path d="M0.8,6.4 H9.2" stroke="#666" stroke-width="1.4"/><path d="M5,7 V10.8" stroke="#666" stroke-width="1.2"/></svg>
<div class="" style="left:26px;top:202.4px;width:329.8px;height:43.9px;background:#d9f0ff"></div>
<div class="" style="left:26px;top:246.2px;width:329.8px;height:43.9px;background:#ddfae3"></div>
<div class="" style="left:26px;top:290.0px;width:329.8px;height:43.9px;background:#d9f0ff"></div>
<div class="" style="left:26px;top:333.8px;width:329.8px;height:43.9px;background:#ddfae3"></div>
<div class="" style="left:26px;top:377.6px;width:329.8px;height:43.9px;background:#d9f0ff"></div>
<div class="" style="left:26px;top:421.4px;width:329.8px;height:43.9px;background:#ddfae3"></div>
<div class="" style="left:26px;top:465.2px;width:329.8px;height:43.9px;background:#d9f0ff"></div>
<div class="" style="left:26px;top:509.0px;width:329.8px;height:43.9px;background:#ddfae3"></div>
<div class="" style="left:26px;top:552.8px;width:329.8px;height:43.9px;background:#d9f0ff"></div>
<div class="" style="left:26px;top:596.6px;width:329.8px;height:43.9px;background:#ddfae3"></div>
<div class="" style="left:26px;top:640.4px;width:329.8px;height:43.9px;background:#d9f0ff"></div>
<div class="" style="left:26px;top:684.2px;width:329.8px;height:43.9px;background:#ddfae3"></div>
<div class="" style="left:47.5px;top:232px;width:1px;height:473.19999999999993px;background:repeating-linear-gradient(to bottom,#c4c4d0 0 1px,transparent 1px 2px)"></div>
<div class="" style="left:91.3px;top:243.5px;width:1px;height:104.29999999999995px;background:repeating-linear-gradient(to bottom,#c4c4d0 0 1px,transparent 1px 2px)"></div>
<div class="" style="left:135.2px;top:375.79999999999995px;width:1px;height:242.80000000000007px;background:repeating-linear-gradient(to bottom,#c4c4d0 0 1px,transparent 1px 2px)"></div>
<svg class="i" style="left:39.4px;top:215.5px" width="17" height="17" viewBox="0 0 17 17" ><circle cx="8.5" cy="8.5" r="7" fill="#d9f0ff"/><circle cx="8.5" cy="8.5" r="7.4" fill="none" stroke="#3c3c3c" stroke-width="1.5"/><path d="M5.2,5.2 L11,11 M6.2,11.4 H11.4 V6.2" fill="none" stroke="#3c3c3c" stroke-width="1.7"/></svg>
<div class="" style="left:56.9px;top:223.2px;width:12.000000000000007px;height:1px;background:repeating-linear-gradient(to right,#c4c4d0 0 1px,transparent 1px 2px)"></div>
<svg class="i" style="left:72px;top:209.8px" width="38" height="28" viewBox="0 0 38 28" ><path d="M1,3 Q1,0.5 3.5,0.5 H10.5 Q12,0.5 12.8,2 L13.8,4.5 H30.5 Q32.5,4.5 32.5,6.5 V26 H1 Z" fill="url(#gFoB)" stroke="#d98a30" stroke-width="1"/><path d="M5.2,14.5 H17 L19.5,10.8 H36 Q37.8,10.8 37.3,12.5 L33.2,26 Q32.8,27.5 31,27.5 H2.5 Q0.8,27.5 1.2,26 L4,15.5 Q4.3,14.5 5.2,14.5 Z" fill="url(#gFoO)" stroke="#d9822c" stroke-width="1"/><path d="M6,15.6 H17.6 L20,12 H36" stroke="#fee6b0" stroke-width="1" fill="none" opacity="0.9"/></svg>
<div class="t" style="left:116px;top:216.8px;font-size:13.4px;line-height:18px;height:18px;color:#2c2c34">ماڈیولز</div>
<svg class="i" style="left:83.2px;top:259.3px" width="17" height="17" viewBox="0 0 17 17" ><circle cx="8.5" cy="8.5" r="7" fill="#ddfae3"/><circle cx="8.5" cy="8.5" r="7.4" fill="none" stroke="#a2aaa2" stroke-width="1.5"/><path d="M4,8.5 H12.6 M9,4.8 L12.8,8.5 L9,12.2" fill="none" stroke="#a2aaa2" stroke-width="1.4"/></svg>
<div class="" style="left:100.7px;top:267.0px;width:12.0px;height:1px;background:repeating-linear-gradient(to right,#c4c4d0 0 1px,transparent 1px 2px)"></div>
<svg class="i" style="left:116px;top:253.8px" width="34.5" height="27" viewBox="0 0 34.5 27" ><path d="M1,3 Q1,0.5 3.5,0.5 H10.5 Q12,0.5 12.8,2 L13.8,4.5 H31 Q33,4.5 33,6.5 V12 H1 Z" fill="url(#gFoB)" stroke="#d98a30" stroke-width="1"/><path d="M1.5,10.5 H33 Q33.5,10.5 33.5,11 V24.5 Q33.5,26.5 31.5,26.5 H3 Q1,26.5 1,24.5 V11 Q1,10.5 1.5,10.5 Z" fill="url(#gFoF)" stroke="#d9782a" stroke-width="1"/><path d="M2,11.5 H32.5" stroke="#fdd590" stroke-width="1" opacity="0.9"/></svg>
<div class="t" style="left:160px;top:260.6px;font-size:13.4px;line-height:18px;height:18px;color:#2c2c34">اسٹور</div>
<svg class="i" style="left:83.2px;top:303.1px" width="17" height="17" viewBox="0 0 17 17" ><circle cx="8.5" cy="8.5" r="7" fill="#d9f0ff"/><circle cx="8.5" cy="8.5" r="7.4" fill="none" stroke="#a2aaa2" stroke-width="1.5"/><path d="M4,8.5 H12.6 M9,4.8 L12.8,8.5 L9,12.2" fill="none" stroke="#a2aaa2" stroke-width="1.4"/></svg>
<div class="" style="left:100.7px;top:310.8px;width:12.0px;height:1px;background:repeating-linear-gradient(to right,#c4c4d0 0 1px,transparent 1px 2px)"></div>
<svg class="i" style="left:116px;top:297.6px" width="34.5" height="27" viewBox="0 0 34.5 27" ><path d="M1,3 Q1,0.5 3.5,0.5 H10.5 Q12,0.5 12.8,2 L13.8,4.5 H31 Q33,4.5 33,6.5 V12 H1 Z" fill="url(#gFoB)" stroke="#d98a30" stroke-width="1"/><path d="M1.5,10.5 H33 Q33.5,10.5 33.5,11 V24.5 Q33.5,26.5 31.5,26.5 H3 Q1,26.5 1,24.5 V11 Q1,10.5 1.5,10.5 Z" fill="url(#gFoF)" stroke="#d9782a" stroke-width="1"/><path d="M2,11.5 H32.5" stroke="#fdd590" stroke-width="1" opacity="0.9"/></svg>
<div class="t" style="left:160px;top:304.4px;font-size:13.4px;line-height:18px;height:18px;color:#2c2c34">تنظیم</div>
<svg class="i" style="left:83.2px;top:346.9px" width="17" height="17" viewBox="0 0 17 17" ><circle cx="8.5" cy="8.5" r="7" fill="#ddfae3"/><circle cx="8.5" cy="8.5" r="7.4" fill="none" stroke="#3c3c3c" stroke-width="1.5"/><path d="M5.2,5.2 L11,11 M6.2,11.4 H11.4 V6.2" fill="none" stroke="#3c3c3c" stroke-width="1.7"/></svg>
<div class="" style="left:100.7px;top:354.6px;width:12.0px;height:1px;background:repeating-linear-gradient(to right,#c4c4d0 0 1px,transparent 1px 2px)"></div>
<svg class="i" style="left:116px;top:341.2px" width="38" height="28" viewBox="0 0 38 28" ><path d="M1,3 Q1,0.5 3.5,0.5 H10.5 Q12,0.5 12.8,2 L13.8,4.5 H30.5 Q32.5,4.5 32.5,6.5 V26 H1 Z" fill="url(#gFoB)" stroke="#d98a30" stroke-width="1"/><path d="M5.2,14.5 H17 L19.5,10.8 H36 Q37.8,10.8 37.3,12.5 L33.2,26 Q32.8,27.5 31,27.5 H2.5 Q0.8,27.5 1.2,26 L4,15.5 Q4.3,14.5 5.2,14.5 Z" fill="url(#gFoO)" stroke="#d9822c" stroke-width="1"/><path d="M6,15.6 H17.6 L20,12 H36" stroke="#fee6b0" stroke-width="1" fill="none" opacity="0.9"/></svg>
<div class="t" style="left:160px;top:348.2px;font-size:13.4px;line-height:18px;height:18px;color:#2c2c34">مویشیوں کی افزائش</div>
<div class="" style="left:136px;top:398.4px;width:21px;height:1px;background:repeating-linear-gradient(to right,#c4c4d0 0 1px,transparent 1px 2px)"></div>
<svg class="i" style="left:163.7px;top:381.2px" width="30" height="34" viewBox="0 0 30 34" ><rect x="0.5" y="0.5" width="29" height="33" rx="2.50" fill="url(#gBkF)" stroke="#4774b8" stroke-width="1"/><path d="M3.00,0.5 H6.20 V33.5 H3.00 A2.50,2.50 0 0 1 0.5,31.00 V3.00 A2.50,2.50 0 0 1 3.00,0.5 Z" fill="url(#gBkS)"/><rect x="2.85" y="1.87" width="26.15" height="2.38" fill="#ecf0f7"/><rect x="2.85" y="4.25" width="26.15" height="0.85" fill="#6f8fc4" opacity="0.75"/></svg>
<div class="t" style="left:204px;top:392.0px;font-size:13.4px;line-height:18px;height:18px;color:#2c2c34">افزائش نسل</div>
<div class="" style="left:136px;top:442.2px;width:21px;height:1px;background:repeating-linear-gradient(to right,#c4c4d0 0 1px,transparent 1px 2px)"></div>
<svg class="i" style="left:163.7px;top:425.0px" width="30" height="34" viewBox="0 0 30 34" ><rect x="0.5" y="0.5" width="29" height="33" rx="2.50" fill="url(#gBkF)" stroke="#4774b8" stroke-width="1"/><path d="M3.00,0.5 H6.20 V33.5 H3.00 A2.50,2.50 0 0 1 0.5,31.00 V3.00 A2.50,2.50 0 0 1 3.00,0.5 Z" fill="url(#gBkS)"/><rect x="2.85" y="1.87" width="26.15" height="2.38" fill="#ecf0f7"/><rect x="2.85" y="4.25" width="26.15" height="0.85" fill="#6f8fc4" opacity="0.75"/></svg>
<div class="" style="left:201px;top:420.8px;width:154.8px;height:43.4px;background:#b4b4b4"></div>
<div class="t" style="left:204px;top:435.4px;font-size:12.2px;line-height:16px;color:#fff">جانور</div>
<div class="" style="left:136px;top:486.0px;width:21px;height:1px;background:repeating-linear-gradient(to right,#c4c4d0 0 1px,transparent 1px 2px)"></div>
<svg class="i" style="left:163.7px;top:468.8px" width="30" height="34" viewBox="0 0 30 34" ><rect x="0.5" y="0.5" width="29" height="33" rx="2.50" fill="url(#gBkF)" stroke="#4774b8" stroke-width="1"/><path d="M3.00,0.5 H6.20 V33.5 H3.00 A2.50,2.50 0 0 1 0.5,31.00 V3.00 A2.50,2.50 0 0 1 3.00,0.5 Z" fill="url(#gBkS)"/><rect x="2.85" y="1.87" width="26.15" height="2.38" fill="#ecf0f7"/><rect x="2.85" y="4.25" width="26.15" height="0.85" fill="#6f8fc4" opacity="0.75"/></svg>
<div class="t" style="left:204px;top:479.6px;font-size:13.4px;line-height:18px;height:18px;color:#2c2c34">دودھ کی پیداوار</div>
<div class="" style="left:136px;top:529.8px;width:21px;height:1px;background:repeating-linear-gradient(to right,#c4c4d0 0 1px,transparent 1px 2px)"></div>
<svg class="i" style="left:163.7px;top:512.6px" width="30" height="34" viewBox="0 0 30 34" ><rect x="0.5" y="0.5" width="29" height="33" rx="2.50" fill="url(#gBkF)" stroke="#4774b8" stroke-width="1"/><path d="M3.00,0.5 H6.20 V33.5 H3.00 A2.50,2.50 0 0 1 0.5,31.00 V3.00 A2.50,2.50 0 0 1 3.00,0.5 Z" fill="url(#gBkS)"/><rect x="2.85" y="1.87" width="26.15" height="2.38" fill="#ecf0f7"/><rect x="2.85" y="4.25" width="26.15" height="0.85" fill="#6f8fc4" opacity="0.75"/></svg>
<div class="t" style="left:204px;top:523.4px;font-size:13.4px;line-height:18px;height:18px;color:#2c2c34">سرگرمی</div>
<div class="" style="left:136px;top:573.6px;width:21px;height:1px;background:repeating-linear-gradient(to right,#c4c4d0 0 1px,transparent 1px 2px)"></div>
<svg class="i" style="left:163.7px;top:556.4px" width="30" height="34" viewBox="0 0 30 34" ><rect x="0.5" y="0.5" width="29" height="33" rx="2.50" fill="url(#gBkF)" stroke="#4774b8" stroke-width="1"/><path d="M3.00,0.5 H6.20 V33.5 H3.00 A2.50,2.50 0 0 1 0.5,31.00 V3.00 A2.50,2.50 0 0 1 3.00,0.5 Z" fill="url(#gBkS)"/><rect x="2.85" y="1.87" width="26.15" height="2.38" fill="#ecf0f7"/><rect x="2.85" y="4.25" width="26.15" height="0.85" fill="#6f8fc4" opacity="0.75"/></svg>
<div class="t" style="left:204px;top:567.2px;font-size:13.4px;line-height:18px;height:18px;color:#2c2c34">وزن کرنا</div>
<div class="" style="left:136px;top:617.4px;width:21px;height:1px;background:repeating-linear-gradient(to right,#c4c4d0 0 1px,transparent 1px 2px)"></div>
<svg class="i" style="left:163.7px;top:600.2px" width="30" height="34" viewBox="0 0 30 34" ><rect x="0.5" y="0.5" width="29" height="33" rx="2.50" fill="url(#gBkF)" stroke="#4774b8" stroke-width="1"/><path d="M3.00,0.5 H6.20 V33.5 H3.00 A2.50,2.50 0 0 1 0.5,31.00 V3.00 A2.50,2.50 0 0 1 3.00,0.5 Z" fill="url(#gBkS)"/><rect x="2.85" y="1.87" width="26.15" height="2.38" fill="#ecf0f7"/><rect x="2.85" y="4.25" width="26.15" height="0.85" fill="#6f8fc4" opacity="0.75"/></svg>
<div class="t" style="left:204px;top:611.0px;font-size:13.4px;line-height:18px;height:18px;color:#2c2c34">ٹیسٹنگ</div>
<svg class="i" style="left:39.4px;top:653.5px" width="17" height="17" viewBox="0 0 17 17" ><circle cx="8.5" cy="8.5" r="7" fill="#d9f0ff"/><circle cx="8.5" cy="8.5" r="7.4" fill="none" stroke="#a2aaa2" stroke-width="1.5"/><path d="M4,8.5 H12.6 M9,4.8 L12.8,8.5 L9,12.2" fill="none" stroke="#a2aaa2" stroke-width="1.4"/></svg>
<div class="" style="left:56.9px;top:661.2px;width:12.000000000000007px;height:1px;background:repeating-linear-gradient(to right,#c4c4d0 0 1px,transparent 1px 2px)"></div>
<svg class="i" style="left:72px;top:648.0px" width="34.5" height="27" viewBox="0 0 34.5 27" ><path d="M1,3 Q1,0.5 3.5,0.5 H10.5 Q12,0.5 12.8,2 L13.8,4.5 H31 Q33,4.5 33,6.5 V12 H1 Z" fill="url(#gFoB)" stroke="#d98a30" stroke-width="1"/><path d="M1.5,10.5 H33 Q33.5,10.5 33.5,11 V24.5 Q33.5,26.5 31.5,26.5 H3 Q1,26.5 1,24.5 V11 Q1,10.5 1.5,10.5 Z" fill="url(#gFoF)" stroke="#d9782a" stroke-width="1"/><path d="M2,11.5 H32.5" stroke="#fdd590" stroke-width="1" opacity="0.9"/></svg>
<div class="t" style="left:116px;top:654.8px;font-size:13.4px;line-height:18px;height:18px;color:#2c2c34">ڈائریکٹریز</div>
<svg class="i" style="left:39.4px;top:697.3px" width="17" height="17" viewBox="0 0 17 17" ><circle cx="8.5" cy="8.5" r="7" fill="#ddfae3"/><circle cx="8.5" cy="8.5" r="7.4" fill="none" stroke="#a2aaa2" stroke-width="1.5"/><path d="M4,8.5 H12.6 M9,4.8 L12.8,8.5 L9,12.2" fill="none" stroke="#a2aaa2" stroke-width="1.4"/></svg>
<div class="" style="left:56.9px;top:705.0px;width:12.000000000000007px;height:1px;background:repeating-linear-gradient(to right,#c4c4d0 0 1px,transparent 1px 2px)"></div>
<svg class="i" style="left:72px;top:691.8px" width="34.5" height="27" viewBox="0 0 34.5 27" ><path d="M1,3 Q1,0.5 3.5,0.5 H10.5 Q12,0.5 12.8,2 L13.8,4.5 H31 Q33,4.5 33,6.5 V12 H1 Z" fill="url(#gFoB)" stroke="#d98a30" stroke-width="1"/><path d="M1.5,10.5 H33 Q33.5,10.5 33.5,11 V24.5 Q33.5,26.5 31.5,26.5 H3 Q1,26.5 1,24.5 V11 Q1,10.5 1.5,10.5 Z" fill="url(#gFoF)" stroke="#d9782a" stroke-width="1"/><path d="M2,11.5 H32.5" stroke="#fdd590" stroke-width="1" opacity="0.9"/></svg>
<div class="t" style="left:116px;top:698.6px;font-size:13.4px;line-height:18px;height:18px;color:#2c2c34">رپورٹس</div>
<svg class="i" style="left:327.5px;top:826.5px" width="17" height="17" viewBox="0 0 17 17" ><circle cx="6.6" cy="6.6" r="4.8" fill="#fff" stroke="#1a6fc8" stroke-width="2.2"/><path d="M10.4,10.4 L15,15" stroke="#1a6fc8" stroke-width="3" stroke-linecap="round"/></svg>
<div class="" style="left:24px;top:856.5px;width:335px;height:42px;border:1px solid #c6c6c6;background:#fff"></div>
<svg class="i" style="left:29.5px;top:866.5px" width="19" height="19" viewBox="0 0 19 19" ><path d="M1,18.5 Q1,11.5 6,10.8 H13 Q18,11.5 18,18.5 Z" fill="url(#gBodyG)" stroke="#6a9a3c" stroke-width="0.6"/><ellipse cx="9.5" cy="6" rx="5" ry="5.60" fill="url(#gHair)"/><ellipse cx="9.75" cy="7.68" rx="3.30" ry="3.92" fill="#f4d2ac"/><path d="M6.00,5.44 Q9.50,1.80 13.10,6.28 Q10.00,4.04 6.00,5.44 Z" fill="#b07a4c" opacity="0.8"/></svg>
<div class="t g" style="left:54.5px;top:868px;font-size:13px;line-height:18px;height:18px">ٹیکنیکل سپورٹ</div>
<svg class="i" style="left:296px;top:871.5px" width="13" height="11" viewBox="0 0 13 11" ><rect x="0.8" y="1.6" width="10.6" height="8" fill="#fff" stroke="#777" stroke-width="1.2"/><rect x="0.2" y="1" width="11.8" height="2.4" fill="#777"/></svg>
<svg class="i" style="left:333.5px;top:871px" width="10" height="11" viewBox="0 0 10 11" ><path d="M2.6,0.6 H7.4 V6 H2.6 Z" fill="#aaa" stroke="#777" stroke-width="1"/><rect x="5" y="1" width="2" height="5" fill="#666"/><path d="M0.8,6.4 H9.2" stroke="#666" stroke-width="1.4"/><path d="M5,7 V10.8" stroke="#666" stroke-width="1.2"/></svg>
<div class="" style="left:22px;top:902.4px;width:184px;height:1px;background:#cfcfcf"></div>
<div class="" style="left:343px;top:905.6px;width:945.5px;height:1px;background:#d4d4d4"></div>
<div class="" style="left:24px;top:902.4px;width:182px;height:53.6px;background:#f4f4f4;border:1px solid #c9c9c9"></div>
<div class="" style="left:205px;top:903.2px;width:139px;height:53px;background:#fff;border:1px solid #c9c9c9;border-bottom:none"></div>
<div class="" style="left:205px;top:955.4px;width:139px;height:2.6px;background:#1e9af0"></div>
<svg class="i" style="left:39px;top:912.5px" width="31" height="34" viewBox="0 0 31 34" ><rect x="0.5" y="0.5" width="30" height="33" rx="2.58" fill="url(#gBkF)" stroke="#4774b8" stroke-width="1"/><path d="M3.08,0.5 H6.39 V33.5 H3.08 A2.58,2.58 0 0 1 0.5,30.92 V3.08 A2.58,2.58 0 0 1 3.08,0.5 Z" fill="url(#gBkS)"/><rect x="2.94" y="1.87" width="27.05" height="2.38" fill="#ecf0f7"/><rect x="2.94" y="4.25" width="27.05" height="0.85" fill="#6f8fc4" opacity="0.75"/></svg>
<div class="t" style="left:83px;top:921px;font-size:13.2px;line-height:18px;height:18px;color:#6e6e6e">افزائش نسل</div>
<svg class="i" style="left:173px;top:923.5px" width="13" height="12" viewBox="0 0 13 12" ><rect x="-3" y="-3" width="19" height="18" fill="#fff"/><path d="M1.4,1.4 L11.4,10.6 M11.4,1.4 L1.4,10.6" stroke="#1f8fe0" stroke-width="2"/></svg>
<svg class="i" style="left:222px;top:913px" width="31" height="34" viewBox="0 0 31 34" ><rect x="0.5" y="0.5" width="30" height="33" rx="2.58" fill="url(#gBkF)" stroke="#4774b8" stroke-width="1"/><path d="M3.08,0.5 H6.39 V33.5 H3.08 A2.58,2.58 0 0 1 0.5,30.92 V3.08 A2.58,2.58 0 0 1 3.08,0.5 Z" fill="url(#gBkS)"/><rect x="2.94" y="1.87" width="27.05" height="2.38" fill="#ecf0f7"/><rect x="2.94" y="4.25" width="27.05" height="0.85" fill="#6f8fc4" opacity="0.75"/></svg>
<div class="t" style="left:265.5px;top:922.5px;font-size:12.2px;line-height:18px;height:18px;color:#1f8fe0">جانور</div>
<svg class="i" style="left:311.5px;top:925px" width="12" height="11" viewBox="0 0 12 11" ><path d="M1.2,1.2 L10.8,9.8 M10.8,1.2 L1.2,9.8" stroke="#1f8fe0" stroke-width="2"/></svg>
<svg class="i" style="left:28.5px;top:960.8px" width="20" height="20" viewBox="0 0 20 20" ><circle cx="10" cy="10" r="9.8" fill="#3f7fc4"/><circle cx="10" cy="5.4" r="1.7" fill="#fff"/><path d="M8,8.2 H11.5 V15.6 H8.6 V9.8 H8 Z" fill="#fff"/></svg>
<div class="t" style="left:70px;top:963px;font-size:13px;line-height:18px;height:18px;color:#2a2a2a;letter-spacing:0.45px">7.3.9113.10 Standard</div>
<div class="" style="left:229.5px;top:963px;width:1px;height:18px;background:#c2c2c2"></div>
<svg class="i" style="left:243px;top:962px" width="16" height="19" viewBox="0 0 16 19" ><path d="M1,3.2 V14.8 Q1,17.6 8,17.6 Q15,17.6 15,14.8 V3.2 Z" fill="#f4c064" stroke="#c88a38" stroke-width="0.9"/><ellipse cx="8" cy="3.2" rx="7" ry="2.6" fill="#fbe2a4" stroke="#c88a38" stroke-width="0.9"/><path d="M1,7.2 Q1,9.8 8,9.8 Q15,9.8 15,7.2 M1,11.2 Q1,13.8 8,13.8 Q15,13.8 15,11.2" fill="none" stroke="#c88a38" stroke-width="0.9"/></svg>
<div class="t" style="left:281.5px;top:963px;font-size:13px;line-height:18px;height:18px;color:#2a2a2a;letter-spacing:0.3px">localhost (utf8)</div>
<div class="" style="left:399.5px;top:963px;width:1px;height:18px;background:#c2c2c2"></div>
<svg class="i" style="left:412px;top:962.5px" width="19" height="19" viewBox="0 0 19 19" ><path d="M1,18.5 Q1,11.5 6,10.8 H13 Q18,11.5 18,18.5 Z" fill="url(#gBodyG)" stroke="#6a9a3c" stroke-width="0.6"/><ellipse cx="9.5" cy="6" rx="5" ry="5.60" fill="url(#gHair)"/><ellipse cx="9.75" cy="7.68" rx="3.30" ry="3.92" fill="#f4d2ac"/><path d="M6.00,5.44 Q9.50,1.80 13.10,6.28 Q10.00,4.04 6.00,5.44 Z" fill="#b07a4c" opacity="0.8"/></svg>
<div class="t" style="left:452px;top:963px;font-size:13px;line-height:18px;height:18px;color:#2a2a2a">NIKOLAY (MAIN)</div>
<div class="" style="left:577.5px;top:963px;width:1px;height:18px;background:#c2c2c2"></div>
<svg class="i" style="left:590.5px;top:962.5px" width="18.2" height="18.2" viewBox="0 0 18.2 18.2" ><rect x="0.6" y="0.6" width="17" height="17" fill="#fff" stroke="#8c8ca0" stroke-width="1"/><rect x="1" y="1" width="16.2" height="4" fill="#d85050"/><text x="9.1" y="15" font-size="10.5" font-weight="bold" text-anchor="middle" fill="#303850" font-family="Liberation Sans,sans-serif">31</text></svg>
<div class="t" style="left:631.5px;top:963px;font-size:13px;line-height:18px;height:18px;color:#2a2a2a;letter-spacing:0.5px">13.08.2024</div>
<div class="" style="left:727px;top:963px;width:1px;height:18px;background:#c2c2c2"></div>
<div class="t" style="left:761.5px;top:963px;font-size:13px;line-height:18px;height:18px;color:#2a2a2a;letter-spacing:0.6px">00:00:00:136</div>
<div class="" style="left:876px;top:963px;width:1px;height:18px;background:#c2c2c2"></div>
<div class="" style="left:1257.5px;top:963px;width:1px;height:18px;background:#c2c2c2"></div>
<svg class="i" style="left:1272px;top:967px" width="14" height="14" viewBox="0 0 14 14" ><rect x="11.4" y="1.4" width="2" height="2" fill="#747474"/><rect x="11.4" y="6.4" width="2" height="2" fill="#747474"/><rect x="6.3" y="6.4" width="2" height="2" fill="#747474"/><rect x="11.4" y="11.5" width="2" height="2" fill="#747474"/><rect x="6.3" y="11.5" width="2" height="2" fill="#747474"/><rect x="1.3" y="11.5" width="2" height="2" fill="#747474"/></svg>
<div class="" style="left:368.6px;top:176.4px;width:1px;height:19.4px;background:#b4b4b4"></div>
<div class="" style="left:371.20000000000005px;top:176.4px;width:1px;height:19.4px;background:#b4b4b4"></div>
<svg class="i" style="left:380.1px;top:167.7px" width="36" height="36" viewBox="0 0 36 36" ><circle cx="18" cy="18" r="17.3" fill="url(#gClk)" stroke="#d06868" stroke-width="0.8"/><circle cx="18" cy="18" r="15.2" fill="none" stroke="#f8b8b8" stroke-width="1.2" opacity="0.8"/><circle cx="18" cy="18" r="13" fill="#f1f4f9" stroke="#cc6a6a" stroke-width="1"/><circle cx="28.60" cy="18.00" r="0.6" fill="#8ea0c0"/><circle cx="27.18" cy="23.30" r="0.6" fill="#8ea0c0"/><circle cx="23.30" cy="27.18" r="0.6" fill="#8ea0c0"/><circle cx="18.00" cy="28.60" r="0.6" fill="#8ea0c0"/><circle cx="12.70" cy="27.18" r="0.6" fill="#8ea0c0"/><circle cx="8.82" cy="23.30" r="0.6" fill="#8ea0c0"/><circle cx="7.40" cy="18.00" r="0.6" fill="#8ea0c0"/><circle cx="8.82" cy="12.70" r="0.6" fill="#8ea0c0"/><circle cx="12.70" cy="8.82" r="0.6" fill="#8ea0c0"/><circle cx="18.00" cy="7.40" r="0.6" fill="#8ea0c0"/><circle cx="23.30" cy="8.82" r="0.6" fill="#8ea0c0"/><circle cx="27.18" cy="12.70" r="0.6" fill="#8ea0c0"/><path d="M18,17.6 H5.6" stroke="#e05050" stroke-width="1.1"/><path d="M18,18 L25.6,9.8" stroke="#5a6480" stroke-width="1.4" stroke-linecap="round"/><path d="M18,18 V29.6" stroke="#6a7490" stroke-width="2" stroke-linecap="round"/><circle cx="18" cy="18" r="1.6" fill="#dfe6f2" stroke="#6a7490" stroke-width="0.8"/></svg>
<svg class="i" style="left:434.4px;top:178.2px" width="17" height="17" viewBox="0 0 17 17" ><circle cx="8.5" cy="8.5" r="7.6" fill="#fff" stroke="#c4c4c4" stroke-width="1.2"/><path d="M5.6,5.6 L10.8,10.8 M6.6,11.2 H11.2 V6.6" fill="none" stroke="#c0c0c0" stroke-width="1.3"/></svg>
<div class="t" style="right:425.5px;top:170px;font-size:24.6px;line-height:34px;height:34px;color:#383838">جانور</div>
<svg class="i" style="left:1266px;top:179.5px" width="17" height="17" viewBox="0 0 17 17" ><circle cx="8.5" cy="8.5" r="7.6" fill="#fff" stroke="#c4c4c4" stroke-width="1.2"/><path d="M5.6,5.6 L10.8,10.8 M6.6,11.2 H11.2 V6.6" fill="none" stroke="#c0c0c0" stroke-width="1.3"/></svg>
<div class="" style="left:361.5px;top:216.4px;width:927.5px;height:354.3px;border:1px solid #d2d2d2;background:#fff"></div>
<div class="" style="left:361.5px;top:216.4px;width:873.5px;height:354.3px;border:2px solid #c0c0c0;border-right:none;border-bottom-width:1.6px"></div>
<div class="" style="left:363.5px;top:218.4px;width:871px;height:41.79999999999998px;background:#f5f5f5"></div>
<div class="" style="left:377px;top:260.2px;width:857.5px;height:43.85px;background:#d9f0ff"></div>
<div class="" style="left:363.5px;top:260.2px;width:13.5px;height:43.85px;background:#f5f5f5"></div>
<div class="" style="left:377px;top:303.9px;width:857.5px;height:43.85px;background:#ddfae3"></div>
<div class="" style="left:363.5px;top:303.9px;width:13.5px;height:43.85px;background:#f5f5f5"></div>
<div class="" style="left:377px;top:347.7px;width:857.5px;height:43.85px;background:#d9f0ff"></div>
<div class="" style="left:363.5px;top:347.7px;width:13.5px;height:43.85px;background:#f5f5f5"></div>
<div class="" style="left:377px;top:391.4px;width:857.5px;height:43.85px;background:#ddfae3"></div>
<div class="" style="left:363.5px;top:391.4px;width:13.5px;height:43.85px;background:#f5f5f5"></div>
<div class="" style="left:377px;top:435.2px;width:857.5px;height:43.85px;background:#d9f0ff"></div>
<div class="" style="left:363.5px;top:435.2px;width:13.5px;height:43.85px;background:#f5f5f5"></div>
<div class="" style="left:377px;top:478.9px;width:857.5px;height:43.85px;background:#ddfae3"></div>
<div class="" style="left:363.5px;top:478.9px;width:13.5px;height:43.85px;background:#f5f5f5"></div>
<div class="" style="left:363.5px;top:259.6px;width:871px;height:1.2px;background:#c2c2c2"></div>
<div class="" style="left:363.5px;top:303.3px;width:871px;height:1.2px;background:#c2c2c2"></div>
<div class="" style="left:363.5px;top:347.1px;width:871px;height:1.2px;background:#c2c2c2"></div>
<div class="" style="left:363.5px;top:390.8px;width:871px;height:1.2px;background:#c2c2c2"></div>
<div class="" style="left:363.5px;top:434.6px;width:871px;height:1.2px;background:#c2c2c2"></div>
<div class="" style="left:363.5px;top:478.3px;width:871px;height:1.2px;background:#c2c2c2"></div>
<div class="" style="left:363.5px;top:522.1px;width:871px;height:1.7px;background:#b8b8b8"></div>
<div class="" style="left:376.5px;top:217.4px;width:1px;height:42.79999999999998px;background:#c2c2c2"></div>
<div class="" style="left:476.0px;top:217.4px;width:1px;height:42.79999999999998px;background:#c2c2c2"></div>
<div class="" style="left:603.5px;top:217.4px;width:1px;height:42.79999999999998px;background:#c2c2c2"></div>
<div class="" style="left:738.5px;top:217.4px;width:1px;height:42.79999999999998px;background:#c2c2c2"></div>
<div class="" style="left:874.0px;top:217.4px;width:1px;height:42.79999999999998px;background:#c2c2c2"></div>
<div class="" style="left:1009.0px;top:217.4px;width:1px;height:42.79999999999998px;background:#c2c2c2"></div>
<div class="" style="left:1143.5px;top:217.4px;width:1px;height:42.79999999999998px;background:#c2c2c2"></div>
<div class="" style="left:1234.0px;top:217.4px;width:1px;height:42.79999999999998px;background:#c2c2c2"></div>
<div class="" style="left:376.5px;top:217.4px;width:1px;height:306.30000000000007px;background:#c2c2c2"></div>
<div class="" style="left:1234px;top:217.4px;width:1px;height:306.30000000000007px;background:#c2c2c2"></div>
<div class="" style="left:1234.2px;top:522.7px;width:1px;height:46.69999999999993px;background:#d4d4d4"></div>
<div class="t" style="left:380.2px;top:222.0px;font-size:13.2px;line-height:18px;height:18px;color:#222;color:#333">ID</div>
<div class="t" style="left:479.7px;top:222.0px;font-size:13.2px;line-height:18px;height:18px;color:#222;color:#333">حالت</div>
<div class="t" style="left:607.2px;top:222.0px;font-size:13.2px;line-height:18px;height:18px;color:#222;color:#333">نسل</div>
<div class="t" style="left:742.2px;top:222.0px;font-size:13.2px;line-height:18px;height:18px;color:#222;color:#333">منفرد نمبر</div>
<div class="t" style="left:877.7px;top:222.0px;font-size:13.2px;line-height:18px;height:18px;color:#222;color:#333">عرفی نام</div>
<div class="t" style="left:1012.7px;top:222.0px;font-size:13.2px;line-height:18px;height:18px;color:#222;color:#333;word-spacing:3px">سال - مہینے</div>
<div class="t" style="left:1147.2px;top:222.0px;font-size:13.2px;line-height:18px;height:18px;color:#222;color:#333;word-spacing:3px">کل مہینے</div>
<div class="t" style="right:835.2px;top:273.8px;font-size:13.2px;line-height:18px;height:18px;color:#222">31</div>
<div class="t" style="left:479.5px;top:273.8px;font-size:13.2px;line-height:18px;height:18px;color:#222">ہے</div>
<div class="t" style="left:607.5px;top:273.8px;font-size:13.2px;line-height:18px;height:18px;color:#222">نسل نمبر 3</div>
<div class="t" style="left:742.5px;top:273.8px;font-size:13.2px;line-height:18px;height:18px;color:#222;letter-spacing:0.15px">4575555330</div>
<div class="t" style="left:1013px;top:273.8px;font-size:13.2px;line-height:18px;height:18px;color:#222">18 - 3</div>
<div class="t" style="right:79.5px;top:273.8px;font-size:13.2px;line-height:18px;height:18px;color:#222">219</div>
<div class="t" style="right:835.2px;top:317.6px;font-size:13.2px;line-height:18px;height:18px;color:#222">32</div>
<div class="t" style="left:479.5px;top:317.6px;font-size:13.2px;line-height:18px;height:18px;color:#222">ہے</div>
<div class="t" style="left:607.5px;top:317.6px;font-size:13.2px;line-height:18px;height:18px;color:#222">نسل نمبر 3</div>
<div class="t" style="left:742.5px;top:317.6px;font-size:13.2px;line-height:18px;height:18px;color:#222;letter-spacing:0.15px">5665434344</div>
<div class="t" style="left:1013px;top:317.6px;font-size:13.2px;line-height:18px;height:18px;color:#222">20 - 8</div>
<div class="t" style="right:79.5px;top:317.6px;font-size:13.2px;line-height:18px;height:18px;color:#222">248</div>
<div class="t" style="right:835.2px;top:361.3px;font-size:13.2px;line-height:18px;height:18px;color:#222">33</div>
<div class="t" style="left:479.5px;top:361.3px;font-size:13.2px;line-height:18px;height:18px;color:#222">ہے</div>
<div class="t" style="left:607.5px;top:361.3px;font-size:13.2px;line-height:18px;height:18px;color:#222">نسل نمبر 3</div>
<div class="t" style="left:742.5px;top:361.3px;font-size:13.2px;line-height:18px;height:18px;color:#222;letter-spacing:0.15px">9325888885</div>
<div class="t" style="left:1013px;top:361.3px;font-size:13.2px;line-height:18px;height:18px;color:#222">10 - 8</div>
<div class="t" style="right:79.5px;top:361.3px;font-size:13.2px;line-height:18px;height:18px;color:#222">128</div>
<div class="t" style="right:835.2px;top:405.1px;font-size:13.2px;line-height:18px;height:18px;color:#222">34</div>
<div class="t" style="left:479.5px;top:405.1px;font-size:13.2px;line-height:18px;height:18px;color:#222">ہے</div>
<div class="t" style="left:607.5px;top:405.1px;font-size:13.2px;line-height:18px;height:18px;color:#222">نسل نمبر 1</div>
<div class="t" style="left:742.5px;top:405.1px;font-size:13.2px;line-height:18px;height:18px;color:#222;letter-spacing:0.15px">009852223</div>
<div class="t" style="left:1013px;top:405.1px;font-size:13.2px;line-height:18px;height:18px;color:#222">13 - 4</div>
<div class="t" style="right:79.5px;top:405.1px;font-size:13.2px;line-height:18px;height:18px;color:#222">160</div>
<div class="t" style="right:835.2px;top:448.8px;font-size:13.2px;line-height:18px;height:18px;color:#222">35</div>
<div class="t" style="left:479.5px;top:448.8px;font-size:13.2px;line-height:18px;height:18px;color:#222">ہے</div>
<div class="t" style="left:607.5px;top:448.8px;font-size:13.2px;line-height:18px;height:18px;color:#222">نسل نمبر 1</div>
<div class="t" style="left:742.5px;top:448.8px;font-size:13.2px;line-height:18px;height:18px;color:#222;letter-spacing:0.15px">009852315</div>
<div class="t" style="left:1013px;top:448.8px;font-size:13.2px;line-height:18px;height:18px;color:#222">13 - 1</div>
<div class="t" style="right:79.5px;top:448.8px;font-size:13.2px;line-height:18px;height:18px;color:#222">157</div>
<div class="t" style="right:835.2px;top:492.6px;font-size:13.2px;line-height:18px;height:18px;color:#222">36</div>
<div class="t" style="left:479.5px;top:492.6px;font-size:13.2px;line-height:18px;height:18px;color:#222">ہے</div>
<div class="t" style="left:607.5px;top:492.6px;font-size:13.2px;line-height:18px;height:18px;color:#222">نسل نمبر 1</div>
<div class="t" style="left:742.5px;top:492.6px;font-size:13.2px;line-height:18px;height:18px;color:#222;letter-spacing:0.15px">009888463</div>
<div class="t" style="left:1013px;top:492.6px;font-size:13.2px;line-height:18px;height:18px;color:#222">12 - 1</div>
<div class="t" style="right:79.5px;top:492.6px;font-size:13.2px;line-height:18px;height:18px;color:#222">145</div>
<div class="" style="left:377px;top:260.0px;width:857.5px;height:44px;border:1px dotted #333"></div>
<svg class="i" style="left:366.5px;top:278px" width="6" height="10" viewBox="0 0 6 10" ><path d="M0.5,0.8 L5,4.8 L0.5,8.8 Z" fill="#444"/></svg>
<div class="" style="left:363.5px;top:523.5px;width:871px;height:46.49999999999996px;background:#f5f5f5"></div>
<div class="" style="left:380px;top:527.5px;width:95px;height:38.5px;background:#fff;border:1px solid #d2d2d2"></div>
<div class="t" style="right:842px;top:537.5px;font-size:13.2px;line-height:18px;height:18px;color:#222">13</div>
<div class="" style="left:1266.5px;top:217.4px;width:1px;height:352px;background:#c2c2c2"></div>
<div class="" style="left:1272.5px;top:238.5px;width:10px;height:143px;background:#c2c2c2"></div>
<svg class="i" style="left:1273.5px;top:226.5px" width="8" height="5" viewBox="0 0 8 5" ><path d="M0,4.5 L4,0.5 L8,4.5 Z" fill="#8a8a8a"/></svg>
<svg class="i" style="left:1273.5px;top:556.5px" width="8" height="5" viewBox="0 0 8 5" ><path d="M0,0.5 L4,4.5 L8,0.5 Z" fill="#8a8a8a"/></svg>
<div class="" style="left:815px;top:575px;width:18px;height:1px;background:repeating-linear-gradient(to right,#9a9a9a 0 1px,transparent 1px 2px)"></div>
<div class="" style="left:361.5px;top:634.3px;width:927.2px;height:273px;border:1px solid #d0d0d0;background:#fff"></div>
<div class="" style="left:361.5px;top:634.3px;width:927.2px;height:269.3px;border:1px solid #c6c6c6;border-bottom:2px solid #c2c2c2;background:#fff"></div>
<div class="" style="left:1285.5px;top:636px;width:2.4px;height:266px;background:#ececec"></div>
<div class="" style="left:362px;top:581px;width:127.3px;height:54.3px;background:#fff;border:1px solid #cacaca;border-bottom:none"></div>
<div class="" style="left:362.3px;top:580.8px;width:127px;height:2.8px;background:#1e9af0"></div>
<svg class="i" style="left:380px;top:591px" width="30.5" height="34" viewBox="0 0 30.5 34" ><rect x="0.5" y="0.5" width="29.5" height="33" rx="2.54" fill="url(#gBkF)" stroke="#4774b8" stroke-width="1"/><path d="M3.04,0.5 H6.29 V33.5 H3.04 A2.54,2.54 0 0 1 0.5,30.96 V3.04 A2.54,2.54 0 0 1 3.04,0.5 Z" fill="url(#gBkS)"/><rect x="2.90" y="1.87" width="26.60" height="2.38" fill="#ecf0f7"/><rect x="2.90" y="4.25" width="26.60" height="0.85" fill="#6f8fc4" opacity="0.75"/></svg>
<div class="t" style="left:423.5px;top:597.5px;font-size:19px;line-height:28px;height:28px;color:#1f95e8">خوراک</div>
<div class="" style="left:364px;top:638.3px;width:922px;height:261.6px;border:1px solid #c8c8c8;background:#fff"></div>
<div class="" style="left:364px;top:638.3px;width:871.5px;height:220px;border:2px solid #c0c0c0;border-right:none;border-bottom:none"></div>
<div class="" style="left:366px;top:640.3px;width:869.5px;height:41.49999999999996px;background:#f5f5f5"></div>
<div class="" style="left:379.5px;top:681.8px;width:855.5px;height:43.8px;background:#b4b4b4"></div>
<div class="" style="left:366px;top:681.8px;width:13.5px;height:43.8px;background:#f5f5f5"></div>
<div class="" style="left:379.5px;top:725.5px;width:855.5px;height:43.8px;background:#ddfae3"></div>
<div class="" style="left:366px;top:725.5px;width:13.5px;height:43.8px;background:#f5f5f5"></div>
<div class="" style="left:379.5px;top:769.2px;width:855.5px;height:43.8px;background:#d9f0ff"></div>
<div class="" style="left:366px;top:769.2px;width:13.5px;height:43.8px;background:#f5f5f5"></div>
<div class="" style="left:379.5px;top:812.9px;width:855.5px;height:43.8px;background:#ddfae3"></div>
<div class="" style="left:366px;top:812.9px;width:13.5px;height:43.8px;background:#f5f5f5"></div>
<div class="" style="left:365.5px;top:681.3px;width:870px;height:1px;background:#c2c2c2"></div>
<div class="" style="left:365.5px;top:725.0px;width:870px;height:1px;background:#b4b4b4"></div>
<div class="" style="left:365.5px;top:768.7px;width:870px;height:1px;background:#c2c2c2"></div>
<div class="" style="left:365.5px;top:812.4px;width:870px;height:1px;background:#c2c2c2"></div>
<div class="" style="left:365.5px;top:856.1px;width:870px;height:1px;background:#c2c2c2"></div>
<div class="" style="left:379.0px;top:639.5px;width:1px;height:42.299999999999955px;background:#c2c2c2"></div>
<div class="" style="left:545.0px;top:639.5px;width:1px;height:42.299999999999955px;background:#c2c2c2"></div>
<div class="" style="left:651.5px;top:639.5px;width:1px;height:42.299999999999955px;background:#c2c2c2"></div>
<div class="" style="left:774.0px;top:639.5px;width:1px;height:42.299999999999955px;background:#c2c2c2"></div>
<div class="" style="left:992.5px;top:639.5px;width:1px;height:42.299999999999955px;background:#c2c2c2"></div>
<div class="" style="left:1098.8px;top:639.5px;width:1px;height:42.299999999999955px;background:#c2c2c2"></div>
<div class="" style="left:1234.5px;top:639.5px;width:1px;height:42.299999999999955px;background:#c2c2c2"></div>
<div class="" style="left:379px;top:639.5px;width:1px;height:218.0999999999999px;background:#c2c2c2"></div>
<div class="" style="left:1234.5px;top:639.5px;width:1px;height:218.0999999999999px;background:#c2c2c2"></div>
<div class="t" style="left:382.3px;top:643.1px;font-size:13.2px;line-height:18px;height:18px;color:#222;color:#333">حالت</div>
<div class="t" style="left:548.3px;top:643.1px;font-size:13.2px;line-height:18px;height:18px;color:#222;color:#333">تاریخوں سے</div>
<div class="t" style="left:654.8px;top:643.1px;font-size:13.2px;line-height:18px;height:18px;color:#222;color:#333">تاریخوں پر</div>
<div class="t" style="left:777.3px;top:643.1px;font-size:13.2px;line-height:18px;height:18px;color:#222;color:#333">کھانا کھلانا</div>
<div class="t" style="left:995.8px;top:643.1px;font-size:13.2px;line-height:18px;height:18px;color:#222;color:#333;word-spacing:2.4px">فی دن کی شرح</div>
<div class="t" style="left:1102.1px;top:643.1px;font-size:13.2px;line-height:18px;height:18px;color:#222;color:#333">نوٹ</div>
<div class="t" style="left:416.5px;top:695.2px;font-size:13.2px;line-height:18px;height:18px;color:#222;color:#8e8e8e">تاریخ سے باہر</div>
<div class="t" style="left:548.5px;top:695.2px;font-size:13.2px;line-height:18px;height:18px;color:#222;letter-spacing:0.3px;color:#8e8e8e">09.05.2018</div>
<div class="t" style="left:654.5px;top:695.2px;font-size:13.2px;line-height:18px;height:18px;color:#222;letter-spacing:0.3px;color:#8e8e8e">01.07.2018</div>
<div class="t" style="left:778px;top:695.2px;font-size:13.2px;line-height:18px;height:18px;color:#222;color:#8e8e8e">کچھ پروڈکٹ نمبر 4, کلو 10023</div>
<div class="t" style="right:213.5px;top:695.2px;font-size:13.2px;line-height:18px;height:18px;color:#222;color:#8e8e8e">6.000</div>
<div class="t" style="left:416.5px;top:738.9px;font-size:13.2px;line-height:18px;height:18px;color:#222;word-spacing:2px">سب سے نیا</div>
<div class="t" style="left:548.5px;top:738.9px;font-size:13.2px;line-height:18px;height:18px;color:#222;letter-spacing:0.3px">01.07.2018</div>
<div class="t" style="left:778px;top:738.9px;font-size:13.2px;line-height:18px;height:18px;color:#222">کچھ پروڈکٹ نمبر 6, کلو 10025</div>
<div class="t" style="right:213.5px;top:738.9px;font-size:13.2px;line-height:18px;height:18px;color:#222">2.000</div>
<div class="t" style="left:416.5px;top:782.6px;font-size:13.2px;line-height:18px;height:18px;color:#222;word-spacing:2px">سب سے نیا</div>
<div class="t" style="left:548.5px;top:782.6px;font-size:13.2px;line-height:18px;height:18px;color:#222;letter-spacing:0.3px">02.07.2019</div>
<div class="t" style="left:778px;top:782.6px;font-size:13.2px;line-height:18px;height:18px;color:#222">کچھ پروڈکٹ نمبر 4, کلو 10023</div>
<div class="t" style="right:213.5px;top:782.6px;font-size:13.2px;line-height:18px;height:18px;color:#222">5.500</div>
<div class="t" style="left:416.5px;top:826.3px;font-size:13.2px;line-height:18px;height:18px;color:#222;word-spacing:2px">سب سے نیا</div>
<div class="t" style="left:548.5px;top:826.3px;font-size:13.2px;line-height:18px;height:18px;color:#222;letter-spacing:0.3px">23.05.2018</div>
<div class="t" style="left:778px;top:826.3px;font-size:13.2px;line-height:18px;height:18px;color:#222">کچھ پروڈکٹ نمبر 3, کلو 10022</div>
<div class="t" style="right:213.5px;top:826.3px;font-size:13.2px;line-height:18px;height:18px;color:#222">30.000</div>
<svg class="i" style="left:369px;top:699px" width="6" height="10" viewBox="0 0 6 10" ><path d="M0.5,0.8 L5,4.8 L0.5,8.8 Z" fill="#444"/></svg>
<div class="" style="left:364px;top:856.4px;width:872px;height:1px;background:#c2c2c2"></div>
<div class="" style="left:365px;top:860px;width:871px;height:39.4px;background:#f5f5f5;border:1px solid #c8c8c8;border-left:none;border-bottom:1.6px solid #c0c0c0"></div>
</body></html>
